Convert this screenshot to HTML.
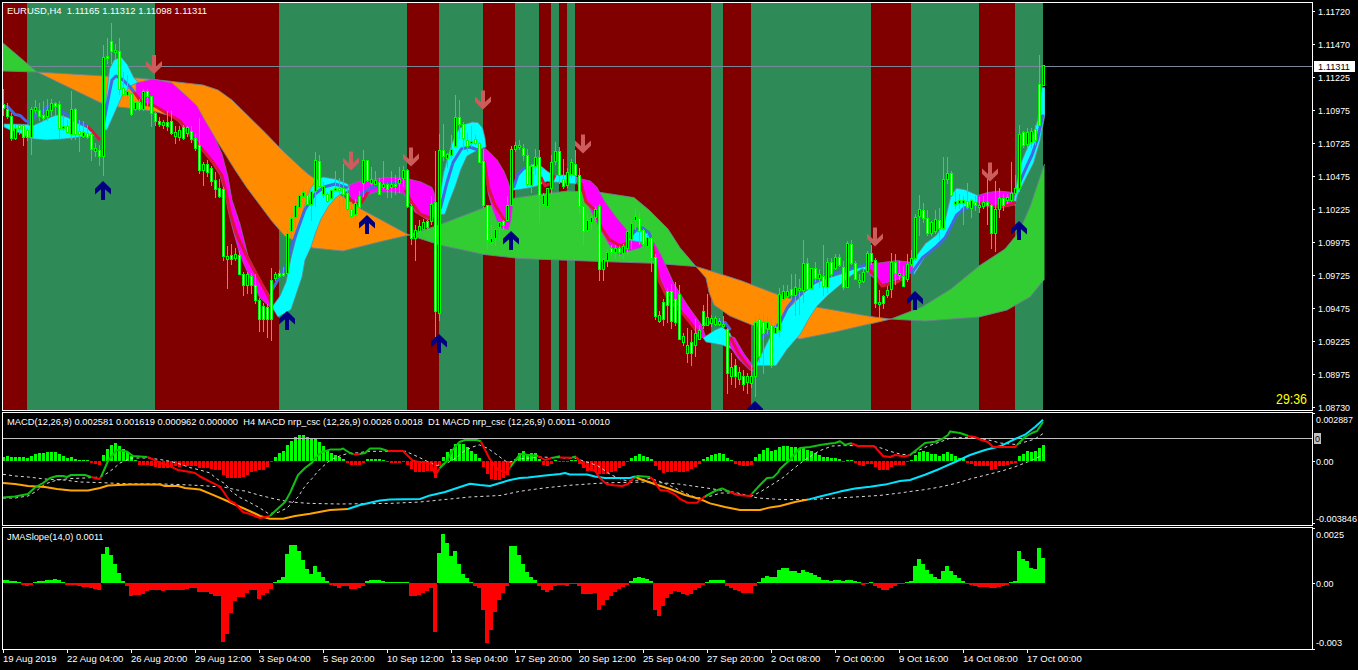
<!DOCTYPE html>
<html><head><meta charset="utf-8"><style>
html,body{margin:0;padding:0;background:#000;}
body{width:1358px;height:670px;overflow:hidden;}
svg{display:block;}
text{font-family:"Liberation Sans",sans-serif;font-size:9.8px;fill:#fff;}
</style></head><body>
<svg width="1358" height="670" viewBox="0 0 1358 670">
<rect width="1358" height="670" fill="#000"/>
<defs><clipPath id="mw"><rect x="3" y="3" width="1309" height="407"/></clipPath></defs>
<g clip-path="url(#mw)">
<g shape-rendering="crispEdges">
<rect x="3" y="3" width="24" height="407" fill="#800000"/>
<rect x="27" y="3" width="128" height="407" fill="#2E8B57"/>
<rect x="155" y="3" width="124" height="407" fill="#800000"/>
<rect x="279" y="3" width="128" height="407" fill="#2E8B57"/>
<rect x="407" y="3" width="32" height="407" fill="#800000"/>
<rect x="439" y="3" width="44" height="407" fill="#2E8B57"/>
<rect x="483" y="3" width="32" height="407" fill="#800000"/>
<rect x="515" y="3" width="24" height="407" fill="#2E8B57"/>
<rect x="539" y="3" width="12" height="407" fill="#800000"/>
<rect x="551" y="3" width="8" height="407" fill="#2E8B57"/>
<rect x="559" y="3" width="8" height="407" fill="#800000"/>
<rect x="567" y="3" width="8" height="407" fill="#2E8B57"/>
<rect x="575" y="3" width="136" height="407" fill="#800000"/>
<rect x="711" y="3" width="12" height="407" fill="#2E8B57"/>
<rect x="723" y="3" width="28" height="407" fill="#800000"/>
<rect x="751" y="3" width="120" height="407" fill="#2E8B57"/>
<rect x="871" y="3" width="40" height="407" fill="#800000"/>
<rect x="911" y="3" width="68" height="407" fill="#2E8B57"/>
<rect x="979" y="3" width="36" height="407" fill="#800000"/>
<rect x="1015" y="3" width="28" height="407" fill="#2E8B57"/>
</g>
<rect x="3" y="66" width="1309" height="1" fill="#778899" shape-rendering="crispEdges"/>
<polygon points="3,43 37,72 37,72 3,71.0" fill="#32CD32"/>
<polygon points="37,72 101,75.8 105,76 119,76.9 137,78 153,79.5 168,81 185,82.9 203,85 213.5,88.5 218,90 224,94.3 232,100 234.4,102.4 247,114.7 249,116.7 259.5,127.1 266,133.5 272,139.7 280,148 284.6,152.4 291,158.4 300,167 308,174 313,177.5 318,181 330,188 343,196.8 361,209 379,218.8 409,235 409,235 379,242 361,246.5 343,251 330,249.7 318,248.5 313,248 308,246 300,242.7 291,239 284.6,236 280,230.6 272,221.3 266,213.3 259.5,204.6 249,190.6 247,187.9 234.4,169 232,165.1 224,152.3 218,142.8 213.5,135.6 203,129.9 185,120 168,115.2 153,111 137,109.1 119,107 105,103.9 101,103 37,72.0" fill="#FF8C00"/>
<polygon points="409,235 439,225 440,224.6 484,207.8 486,207 515,198 520,197.3 543,194 568,191 587,191.9 601,192.5 634,197.6 649,210 654,215 668,229 680,247.7 696,266.5 696,266.5 680,265.3 668,264.4 654,263.3 649,263.1 634,262.6 601,261.5 587,261 568,260.3 543,259.4 520,258.5 515,257.9 486,254.7 484,254.5 440,245 439,244.7 409,235.0" fill="#32CD32"/>
<polygon points="696,266.5 706,269.5 709,270.4 711,271 714,272 730,277.1 742,281 752,284.8 776,293.9 779,295 800,301.8 816,307 835,310.3 874,317 890,319 890.8,319 890.8,319 890,319.2 874,323 835,332 816,335.8 800,339 779,332.9 776,332 752,325 742,320.9 730,316 714,305 711,297.2 709,292 706,278 696,266.5" fill="#FF8C00"/>
<polygon points="890.8,319 891,319 922,307 925,305.1 951,289 979,266 1005,249 1007,246.6 1019,232 1030,207 1044.5,164 1044.5,279 1030,297 1019,303.2 1007,310 1005,310.5 979,317 951,319.1 925,321 922,320.8 891,319.1 890.8,319.0" fill="#32CD32"/>
<polyline points="3,71 37,72 105,76 137,78 168,81 203,85 218,90 232,100 249,116.7 266,133.5 280,148 300,167 308,174 318,181 330,188 361,209 409,235 440,245 484,254.5 520,258.5 587,261 654,263.3 696,266.5 711,271 742,281 779,295 816,307 874,317 890,319 925,321 979,317 1007,310 1030,297 1044.5,279.0" fill="none" stroke="#6F8090" stroke-width="0.9"/>
<polyline points="3,43 37,72 101,103 119,107 153,111 185,120 213.5,135.6 224,152.3 234.4,169 247,187.9 259.5,204.6 272,221.3 284.6,236 291,239 313,248 343,251 379,242 409,235 439,225 486,207 515,198 543,194 568,191 601,192.5 634,197.6 649,210 668,229 680,247.7 696,266.5 706,278 709,292 714,305 730,316 752,325 776,332 800,339 835,332 874,323 891,319 922,307 951,289 979,266 1005,249 1019,232 1030,207 1044.5,164.0" fill="none" stroke="#6F8090" stroke-width="0.9"/>
<polygon points="4,124 11,124 28,124.5 31,126.5 42,121.5 52,116.5 57,115 63,116 68,117.5 73,121 80,124.6 88,128 95,134 95,136 86,136 73,138 63,139 46,140 31,138.6 20,133 10,130 4,127.0" fill="#00FFFF" stroke="#6F8090" stroke-width="0.7"/>
<polygon points="103,130 106,100 109.6,69 114,60 118.6,58 121,57 127.5,64.7 134,78 138.7,82.6 132,85 123,94 116,109.5 107,130.0" fill="#00FFFF" stroke="#6F8090" stroke-width="0.7"/>
<polygon points="136,83 153,79 172,83 186,95.5 197,106 205,120.6 213.6,135 222,154 228,177 232,200 240,224 248,256 262,283 270,296 273,310 270,307 260,298 250,278 240,255 233,230 228.7,213 224.5,192 220,175.3 212,162.8 201.5,150 191,137.7 178,121 168,114 155,106 142,104 136,95.0" fill="#FF00FF" stroke="#6F8090" stroke-width="0.7"/>
<polygon points="272,307 280,296 286,282 291,258 299,226 305,205 310,190 316,180 323,177 335,179 348,184 349.5,190 345,192 336.5,197 328.5,206 321,219 315.5,233 311,247 305,260 302,277 291,309.6 278,317.0" fill="#00FFFF" stroke="#6F8090" stroke-width="0.7"/>
<polygon points="349.5,184.8 360,181 385,177.6 403,177.6 421,182 432,187.4 434.6,194 436.4,215.5 428,220 415,212 408,200 403,193 390,192 375,192 367,195 360,201 353,201 349.5,195.0" fill="#FF00FF" stroke="#6F8090" stroke-width="0.7"/>
<polygon points="439,215 441,189 443.5,173 447,160 451,146 455,136 459,129 465.8,124 472.5,122 478,122.5 482.6,128 485,138 486,147 476,151 467,156 461,169 455,187 449.5,201 445,214.0" fill="#00FFFF" stroke="#6F8090" stroke-width="0.7"/>
<polygon points="483.7,147.6 489.3,152 497.1,159.9 503.8,171 508.3,182.2 511.5,194 512.5,207 511,220.3 508.3,230 501.6,228 497.1,221 492.6,209 488.2,193.4 486,175.5 483.7,157.6" fill="#FF00FF" stroke="#6F8090" stroke-width="0.7"/>
<polygon points="513,190 517.7,175 523,169 528,166.8 534.4,163.7 540.7,165.8 547,171 553,175 574,175 578,178 576,184 547,181.4 538.6,185.6 530,187.7 517.7,189.8" fill="#00FFFF" stroke="#6F8090" stroke-width="0.7"/>
<polygon points="576,177.7 590.4,181 596.7,187 605,201.8 615.5,216.4 626,229 630,235 638.5,241.5 642.7,245.6 640.6,247.7 626,252 619.7,255 611,247.7 601,231 590.4,210 582,191.3 578,185.0" fill="#FF00FF" stroke="#6F8090" stroke-width="0.7"/>
<polygon points="628,240 636,232 643,231 650,236 652,242 640,242.0" fill="#00FFFF" stroke="#6F8090" stroke-width="0.7"/>
<polygon points="650,238 652.6,246 658,273 666,291.8 682,310.6 693,326.8 698.3,337.5 706,337.5 701,324 687.5,305.3 674,283.8 660.6,254 655,244.0" fill="#FF00FF" stroke="#6F8090" stroke-width="0.7"/>
<polygon points="703,338 715,330 722,327 730,333 735,345 735,350 722,345 706,342.0" fill="#00FFFF" stroke="#6F8090" stroke-width="0.7"/>
<polygon points="729,336 734.6,337.5 744,353.7 752,364.4 753,371 749.4,369.8 738.6,359 727,342.0" fill="#FF00FF" stroke="#6F8090" stroke-width="0.7"/>
<polygon points="753,366 757.5,362 768.7,339.6 778,324.6 787.3,309.7 796.6,300.4 806,291 815.3,283.6 828.4,278 843.3,273.3 854.5,268.7 866,265.9 866,270 862,268.7 850.7,276 839.6,285.4 828.4,294.8 817.2,306 809.7,317.2 800.4,334 787.3,349 776,365.7 757.5,365.7" fill="#00FFFF" stroke="#6F8090" stroke-width="0.7"/>
<polygon points="866,264.5 882,262.6 897,260.6 913,262.6 913,272 897,280 882,284 870,275.0" fill="#FF00FF" stroke="#6F8090" stroke-width="0.7"/>
<polygon points="912,262 925.4,243.5 936.7,235 945,221 950.9,195.4 956.5,188.3 965,189.7 978,195.4 978,202.4 973.5,203.9 962,208 953.7,220.9 945,237.9 928,252 914,274.7" fill="#00FFFF" stroke="#6F8090" stroke-width="0.7"/>
<polygon points="977.8,195.4 987.7,192.5 999,191 1013,192.5 1016,202.4 1013,205.3 999,208 987.7,206.7 977.8,202.4" fill="#FF00FF" stroke="#6F8090" stroke-width="0.7"/>
<polygon points="1014,200 1016,187 1020,165.6 1025.5,152 1032,138.7 1037.6,120 1041.7,87.6 1045,87.6 1045,114.5 1040,141 1033.6,163 1027,176 1017.5,195 1015,206.0" fill="#00FFFF" stroke="#6F8090" stroke-width="0.7"/>
<polyline points="3,105.7 8,107 15,114.6 20,115.4 26,121 31,122 36,115 42,112 47,107 52,104.4 57,107 63,112 68,115 73,118 80,122.6 87,126.0" fill="none" stroke="#4169E1" stroke-width="3" stroke-linejoin="round"/>
<polyline points="87,126 92,131 100,140.0" fill="none" stroke="#DC143C" stroke-width="3" stroke-linejoin="round"/>
<polyline points="102,132 107,105 112,80 116,76 123,80 130,87 134,92.0" fill="none" stroke="#4169E1" stroke-width="3" stroke-linejoin="round"/>
<polyline points="134,92 142.5,104 155,106 168,114 180,121 192.5,137.7 203,150 213.5,162.8 221.8,175.3 226,192 230.2,213 236.5,234 248,259 267,293.5 272,305.0" fill="none" stroke="#DC143C" stroke-width="3" stroke-linejoin="round"/>
<polyline points="272,290 286,266 294,240 304.7,210 315,194 324,187 335,184 348,188.0" fill="none" stroke="#4169E1" stroke-width="3" stroke-linejoin="round"/>
<polyline points="360,195 370,188 385,184 400,183.0" fill="none" stroke="#4169E1" stroke-width="3" stroke-linejoin="round"/>
<polyline points="349,198 356,204 362,202 368,192.0" fill="none" stroke="#DC143C" stroke-width="3" stroke-linejoin="round"/>
<polyline points="405,190 412,203 420,214 430,218.0" fill="none" stroke="#DC143C" stroke-width="3" stroke-linejoin="round"/>
<polyline points="440.4,208.6 446.7,183.5 453,162.6 461.3,149 469.7,147 478,150.0" fill="none" stroke="#4169E1" stroke-width="3" stroke-linejoin="round"/>
<polyline points="484.3,160.5 488.5,187.7 494.7,204.4 501,214.8 505,221.0" fill="none" stroke="#DC143C" stroke-width="3" stroke-linejoin="round"/>
<polyline points="513.5,187.7 517.7,175 523,169 528,166.8" fill="none" stroke="#4169E1" stroke-width="3" stroke-linejoin="round"/>
<polyline points="540.7,177 545,185.6 551,183.5 555,175.0" fill="none" stroke="#DC143C" stroke-width="3" stroke-linejoin="round"/>
<polyline points="581,183 586,201.8 594.6,210 601,226.8 609,239.4 619.7,245.6 626,243.5" fill="none" stroke="#DC143C" stroke-width="3" stroke-linejoin="round"/>
<polyline points="630,237 636.4,229 642.7,228 649,233 651,238.3" fill="none" stroke="#4169E1" stroke-width="3" stroke-linejoin="round"/>
<polyline points="652.6,246 659.3,281 668.7,300 684.8,316 695.6,329.5 701,334.8" fill="none" stroke="#DC143C" stroke-width="3" stroke-linejoin="round"/>
<polyline points="703.7,325 714.4,321 725,322.4 730.5,330.0" fill="none" stroke="#4169E1" stroke-width="3" stroke-linejoin="round"/>
<polyline points="730.5,337.5 738.6,353.7 746.7,364.4 752,369.8" fill="none" stroke="#DC143C" stroke-width="3" stroke-linejoin="round"/>
<polyline points="753.7,358 761,338 768.7,333 779.9,323 787.3,307.8 794.8,298.5 804,290 815.3,281 828.4,275.5 843,271 855,267.5 866,265.0" fill="none" stroke="#4169E1" stroke-width="3" stroke-linejoin="round"/>
<polyline points="870,270 882,286 897,282 910,275.0" fill="none" stroke="#DC143C" stroke-width="3" stroke-linejoin="round"/>
<polyline points="911,274 922.5,257.7 936.7,246.4 945,237.9 950.9,226.5 956.5,215.2 965,208 976.4,206.0" fill="none" stroke="#4169E1" stroke-width="3" stroke-linejoin="round"/>
<polyline points="979,202.4 993.4,206.5 1007.5,205.3 1016,202.4" fill="none" stroke="#DC143C" stroke-width="3" stroke-linejoin="round"/>
<polyline points="1019,184 1027,165.6 1032,155 1037.6,138.7 1043,114.5" fill="none" stroke="#4169E1" stroke-width="3" stroke-linejoin="round"/>
<g shape-rendering="crispEdges">
<rect x="3" y="89" width="1" height="27" fill="#00FF00"/>
<rect x="2" y="104" width="3" height="5" fill="#00FF00"/>
<rect x="3" y="105" width="1" height="3" fill="#FFFFFF"/>
<rect x="7" y="103" width="1" height="16" fill="#00FF00"/>
<rect x="6" y="109" width="3" height="8" fill="#00FF00"/>
<rect x="7" y="110" width="1" height="6" fill="#FFFFFF"/>
<rect x="11" y="113" width="1" height="28" fill="#00FF00"/>
<rect x="10" y="116" width="3" height="23" fill="#00FF00"/>
<rect x="11" y="117" width="1" height="21" fill="#FFFFFF"/>
<rect x="15" y="124" width="1" height="16" fill="#00FF00"/>
<rect x="14" y="128" width="3" height="11" fill="#00FF00"/>
<rect x="15" y="129" width="1" height="9" fill="#000000"/>
<rect x="19" y="124" width="1" height="11" fill="#00FF00"/>
<rect x="18" y="125" width="3" height="4" fill="#00FF00"/>
<rect x="19" y="126" width="1" height="2" fill="#FFFFFF"/>
<rect x="23" y="124" width="1" height="22" fill="#00FF00"/>
<rect x="22" y="125" width="3" height="13" fill="#00FF00"/>
<rect x="23" y="126" width="1" height="11" fill="#FFFFFF"/>
<rect x="27" y="128" width="1" height="13" fill="#00FF00"/>
<rect x="26" y="130" width="3" height="8" fill="#00FF00"/>
<rect x="27" y="131" width="1" height="6" fill="#FFFFFF"/>
<rect x="31" y="107" width="1" height="48" fill="#00FF00"/>
<rect x="30" y="109" width="3" height="29" fill="#00FF00"/>
<rect x="31" y="110" width="1" height="27" fill="#000000"/>
<rect x="35" y="100" width="1" height="14" fill="#00FF00"/>
<rect x="34" y="107" width="3" height="4" fill="#00FF00"/>
<rect x="35" y="108" width="1" height="2" fill="#000000"/>
<rect x="39" y="103" width="1" height="18" fill="#00FF00"/>
<rect x="38" y="110" width="3" height="7" fill="#00FF00"/>
<rect x="39" y="111" width="1" height="5" fill="#FFFFFF"/>
<rect x="43" y="101" width="1" height="20" fill="#00FF00"/>
<rect x="42" y="115" width="3" height="4" fill="#00FF00"/>
<rect x="43" y="116" width="1" height="2" fill="#FFFFFF"/>
<rect x="47" y="99" width="1" height="22" fill="#00FF00"/>
<rect x="46" y="110" width="3" height="7" fill="#00FF00"/>
<rect x="47" y="111" width="1" height="5" fill="#000000"/>
<rect x="51" y="99" width="1" height="17" fill="#00FF00"/>
<rect x="50" y="103" width="3" height="8" fill="#00FF00"/>
<rect x="51" y="104" width="1" height="6" fill="#000000"/>
<rect x="55" y="102" width="1" height="14" fill="#00FF00"/>
<rect x="54" y="103" width="3" height="4" fill="#00FF00"/>
<rect x="55" y="104" width="1" height="2" fill="#FFFFFF"/>
<rect x="59" y="101" width="1" height="37" fill="#00FF00"/>
<rect x="58" y="104" width="3" height="25" fill="#00FF00"/>
<rect x="59" y="105" width="1" height="23" fill="#FFFFFF"/>
<rect x="63" y="115" width="1" height="16" fill="#00FF00"/>
<rect x="62" y="126" width="3" height="3" fill="#00FF00"/>
<rect x="63" y="127" width="1" height="1" fill="#000000"/>
<rect x="67" y="120" width="1" height="13" fill="#00FF00"/>
<rect x="66" y="126" width="3" height="7" fill="#00FF00"/>
<rect x="67" y="127" width="1" height="5" fill="#FFFFFF"/>
<rect x="71" y="91" width="1" height="49" fill="#00FF00"/>
<rect x="70" y="109" width="3" height="26" fill="#00FF00"/>
<rect x="71" y="110" width="1" height="24" fill="#000000"/>
<rect x="75" y="108" width="1" height="32" fill="#00FF00"/>
<rect x="74" y="109" width="3" height="26" fill="#00FF00"/>
<rect x="75" y="110" width="1" height="24" fill="#FFFFFF"/>
<rect x="79" y="120" width="1" height="32" fill="#00FF00"/>
<rect x="78" y="131" width="3" height="4" fill="#00FF00"/>
<rect x="79" y="132" width="1" height="2" fill="#FFFFFF"/>
<rect x="83" y="121" width="1" height="17" fill="#00FF00"/>
<rect x="82" y="132" width="3" height="5" fill="#00FF00"/>
<rect x="83" y="133" width="1" height="3" fill="#000000"/>
<rect x="87" y="125" width="1" height="14" fill="#00FF00"/>
<rect x="86" y="133" width="3" height="5" fill="#00FF00"/>
<rect x="87" y="134" width="1" height="3" fill="#FFFFFF"/>
<rect x="91" y="132" width="1" height="29" fill="#00FF00"/>
<rect x="90" y="134" width="3" height="16" fill="#00FF00"/>
<rect x="91" y="135" width="1" height="14" fill="#FFFFFF"/>
<rect x="95" y="143" width="1" height="14" fill="#00FF00"/>
<rect x="94" y="148" width="3" height="4" fill="#00FF00"/>
<rect x="95" y="149" width="1" height="2" fill="#000000"/>
<rect x="99" y="145" width="1" height="21" fill="#00FF00"/>
<rect x="98" y="150" width="3" height="7" fill="#00FF00"/>
<rect x="99" y="151" width="1" height="5" fill="#FFFFFF"/>
<rect x="103" y="45" width="1" height="131" fill="#00FF00"/>
<rect x="102" y="57" width="3" height="100" fill="#00FF00"/>
<rect x="103" y="58" width="1" height="98" fill="#000000"/>
<rect x="107" y="38" width="1" height="26" fill="#00FF00"/>
<rect x="106" y="56" width="3" height="3" fill="#00FF00"/>
<rect x="107" y="57" width="1" height="1" fill="#FFFFFF"/>
<rect x="111" y="23" width="1" height="41" fill="#00FF00"/>
<rect x="110" y="41" width="3" height="11" fill="#00FF00"/>
<rect x="111" y="42" width="1" height="9" fill="#FFFFFF"/>
<rect x="115" y="44" width="1" height="16" fill="#00FF00"/>
<rect x="114" y="50" width="3" height="3" fill="#00FF00"/>
<rect x="115" y="51" width="1" height="1" fill="#000000"/>
<rect x="119" y="38" width="1" height="57" fill="#00FF00"/>
<rect x="118" y="51" width="3" height="39" fill="#00FF00"/>
<rect x="119" y="52" width="1" height="37" fill="#FFFFFF"/>
<rect x="123" y="72" width="1" height="28" fill="#00FF00"/>
<rect x="122" y="88" width="3" height="7" fill="#00FF00"/>
<rect x="123" y="89" width="1" height="5" fill="#FFFFFF"/>
<rect x="127" y="75" width="1" height="23" fill="#00FF00"/>
<rect x="126" y="91" width="3" height="5" fill="#00FF00"/>
<rect x="127" y="92" width="1" height="3" fill="#000000"/>
<rect x="131" y="93" width="1" height="23" fill="#00FF00"/>
<rect x="130" y="94" width="3" height="21" fill="#00FF00"/>
<rect x="131" y="95" width="1" height="19" fill="#FFFFFF"/>
<rect x="135" y="100" width="1" height="11" fill="#00FF00"/>
<rect x="134" y="102" width="3" height="8" fill="#00FF00"/>
<rect x="135" y="103" width="1" height="6" fill="#000000"/>
<rect x="139" y="99" width="1" height="12" fill="#00FF00"/>
<rect x="138" y="102" width="3" height="8" fill="#00FF00"/>
<rect x="139" y="103" width="1" height="6" fill="#FFFFFF"/>
<rect x="143" y="89" width="1" height="22" fill="#00FF00"/>
<rect x="142" y="91" width="3" height="19" fill="#00FF00"/>
<rect x="143" y="92" width="1" height="17" fill="#000000"/>
<rect x="147" y="89" width="1" height="18" fill="#00FF00"/>
<rect x="146" y="91" width="3" height="6" fill="#00FF00"/>
<rect x="147" y="92" width="1" height="4" fill="#FFFFFF"/>
<rect x="151" y="96" width="1" height="31" fill="#00FF00"/>
<rect x="150" y="96" width="3" height="18" fill="#00FF00"/>
<rect x="151" y="97" width="1" height="16" fill="#FFFFFF"/>
<rect x="155" y="112" width="1" height="14" fill="#00FF00"/>
<rect x="154" y="113" width="3" height="9" fill="#00FF00"/>
<rect x="155" y="114" width="1" height="7" fill="#FFFFFF"/>
<rect x="159" y="117" width="1" height="10" fill="#00FF00"/>
<rect x="158" y="121" width="3" height="4" fill="#00FF00"/>
<rect x="159" y="122" width="1" height="2" fill="#FFFFFF"/>
<rect x="163" y="120" width="1" height="9" fill="#00FF00"/>
<rect x="162" y="122" width="3" height="4" fill="#00FF00"/>
<rect x="163" y="123" width="1" height="2" fill="#000000"/>
<rect x="167" y="111" width="1" height="20" fill="#00FF00"/>
<rect x="166" y="122" width="3" height="5" fill="#00FF00"/>
<rect x="167" y="123" width="1" height="3" fill="#FFFFFF"/>
<rect x="171" y="111" width="1" height="24" fill="#00FF00"/>
<rect x="170" y="121" width="3" height="13" fill="#00FF00"/>
<rect x="171" y="122" width="1" height="11" fill="#FFFFFF"/>
<rect x="175" y="126" width="1" height="18" fill="#00FF00"/>
<rect x="174" y="132" width="3" height="5" fill="#00FF00"/>
<rect x="175" y="133" width="1" height="3" fill="#000000"/>
<rect x="179" y="126" width="1" height="15" fill="#00FF00"/>
<rect x="178" y="130" width="3" height="8" fill="#00FF00"/>
<rect x="179" y="131" width="1" height="6" fill="#000000"/>
<rect x="183" y="125" width="1" height="15" fill="#00FF00"/>
<rect x="182" y="127" width="3" height="12" fill="#00FF00"/>
<rect x="183" y="128" width="1" height="10" fill="#FFFFFF"/>
<rect x="187" y="126" width="1" height="11" fill="#00FF00"/>
<rect x="186" y="127" width="3" height="7" fill="#00FF00"/>
<rect x="187" y="128" width="1" height="5" fill="#000000"/>
<rect x="191" y="126" width="1" height="17" fill="#00FF00"/>
<rect x="190" y="131" width="3" height="9" fill="#00FF00"/>
<rect x="191" y="132" width="1" height="7" fill="#FFFFFF"/>
<rect x="195" y="134" width="1" height="17" fill="#00FF00"/>
<rect x="194" y="138" width="3" height="11" fill="#00FF00"/>
<rect x="195" y="139" width="1" height="9" fill="#FFFFFF"/>
<rect x="199" y="118" width="1" height="56" fill="#00FF00"/>
<rect x="198" y="145" width="3" height="26" fill="#00FF00"/>
<rect x="199" y="146" width="1" height="24" fill="#FFFFFF"/>
<rect x="203" y="162" width="1" height="24" fill="#00FF00"/>
<rect x="202" y="164" width="3" height="7" fill="#00FF00"/>
<rect x="203" y="165" width="1" height="5" fill="#000000"/>
<rect x="207" y="160" width="1" height="17" fill="#00FF00"/>
<rect x="206" y="164" width="3" height="9" fill="#00FF00"/>
<rect x="207" y="165" width="1" height="7" fill="#FFFFFF"/>
<rect x="211" y="166" width="1" height="20" fill="#00FF00"/>
<rect x="210" y="168" width="3" height="14" fill="#00FF00"/>
<rect x="211" y="169" width="1" height="12" fill="#FFFFFF"/>
<rect x="215" y="172" width="1" height="26" fill="#00FF00"/>
<rect x="214" y="180" width="3" height="10" fill="#00FF00"/>
<rect x="215" y="181" width="1" height="8" fill="#FFFFFF"/>
<rect x="219" y="179" width="1" height="19" fill="#00FF00"/>
<rect x="218" y="188" width="3" height="9" fill="#00FF00"/>
<rect x="219" y="189" width="1" height="7" fill="#FFFFFF"/>
<rect x="223" y="187" width="1" height="74" fill="#00FF00"/>
<rect x="222" y="189" width="3" height="68" fill="#00FF00"/>
<rect x="223" y="190" width="1" height="66" fill="#FFFFFF"/>
<rect x="227" y="246" width="1" height="43" fill="#00FF00"/>
<rect x="226" y="256" width="3" height="4" fill="#00FF00"/>
<rect x="227" y="257" width="1" height="2" fill="#000000"/>
<rect x="231" y="244" width="1" height="21" fill="#00FF00"/>
<rect x="230" y="255" width="3" height="5" fill="#00FF00"/>
<rect x="231" y="256" width="1" height="3" fill="#FFFFFF"/>
<rect x="235" y="248" width="1" height="13" fill="#00FF00"/>
<rect x="234" y="254" width="3" height="5" fill="#00FF00"/>
<rect x="235" y="255" width="1" height="3" fill="#000000"/>
<rect x="239" y="251" width="1" height="24" fill="#00FF00"/>
<rect x="238" y="255" width="3" height="20" fill="#00FF00"/>
<rect x="239" y="256" width="1" height="18" fill="#FFFFFF"/>
<rect x="243" y="272" width="1" height="24" fill="#00FF00"/>
<rect x="242" y="274" width="3" height="12" fill="#00FF00"/>
<rect x="243" y="275" width="1" height="10" fill="#FFFFFF"/>
<rect x="247" y="272" width="1" height="22" fill="#00FF00"/>
<rect x="246" y="274" width="3" height="12" fill="#00FF00"/>
<rect x="247" y="275" width="1" height="10" fill="#000000"/>
<rect x="251" y="273" width="1" height="21" fill="#00FF00"/>
<rect x="250" y="276" width="3" height="10" fill="#00FF00"/>
<rect x="251" y="277" width="1" height="8" fill="#FFFFFF"/>
<rect x="255" y="274" width="1" height="30" fill="#00FF00"/>
<rect x="254" y="285" width="3" height="16" fill="#00FF00"/>
<rect x="255" y="286" width="1" height="14" fill="#FFFFFF"/>
<rect x="259" y="298" width="1" height="34" fill="#00FF00"/>
<rect x="258" y="300" width="3" height="20" fill="#00FF00"/>
<rect x="259" y="301" width="1" height="18" fill="#FFFFFF"/>
<rect x="263" y="303" width="1" height="29" fill="#00FF00"/>
<rect x="262" y="306" width="3" height="14" fill="#00FF00"/>
<rect x="263" y="307" width="1" height="12" fill="#FFFFFF"/>
<rect x="267" y="304" width="1" height="34" fill="#00FF00"/>
<rect x="266" y="307" width="3" height="13" fill="#00FF00"/>
<rect x="267" y="308" width="1" height="11" fill="#FFFFFF"/>
<rect x="271" y="268" width="1" height="73" fill="#00FF00"/>
<rect x="270" y="280" width="3" height="40" fill="#00FF00"/>
<rect x="271" y="281" width="1" height="38" fill="#FFFFFF"/>
<rect x="275" y="272" width="1" height="9" fill="#00FF00"/>
<rect x="274" y="274" width="3" height="5" fill="#00FF00"/>
<rect x="275" y="275" width="1" height="3" fill="#000000"/>
<rect x="279" y="270" width="1" height="8" fill="#00FF00"/>
<rect x="278" y="273" width="3" height="4" fill="#00FF00"/>
<rect x="279" y="274" width="1" height="2" fill="#FFFFFF"/>
<rect x="283" y="267" width="1" height="10" fill="#00FF00"/>
<rect x="282" y="273" width="3" height="3" fill="#00FF00"/>
<rect x="283" y="274" width="1" height="1" fill="#FFFFFF"/>
<rect x="287" y="230" width="1" height="45" fill="#00FF00"/>
<rect x="286" y="233" width="3" height="41" fill="#00FF00"/>
<rect x="287" y="234" width="1" height="39" fill="#000000"/>
<rect x="291" y="214" width="1" height="25" fill="#00FF00"/>
<rect x="290" y="218" width="3" height="14" fill="#00FF00"/>
<rect x="291" y="219" width="1" height="12" fill="#000000"/>
<rect x="295" y="201" width="1" height="27" fill="#00FF00"/>
<rect x="294" y="205" width="3" height="13" fill="#00FF00"/>
<rect x="295" y="206" width="1" height="11" fill="#000000"/>
<rect x="299" y="194" width="1" height="16" fill="#00FF00"/>
<rect x="298" y="195" width="3" height="13" fill="#00FF00"/>
<rect x="299" y="196" width="1" height="11" fill="#000000"/>
<rect x="303" y="188" width="1" height="14" fill="#00FF00"/>
<rect x="302" y="192" width="3" height="5" fill="#00FF00"/>
<rect x="303" y="193" width="1" height="3" fill="#000000"/>
<rect x="307" y="190" width="1" height="15" fill="#00FF00"/>
<rect x="306" y="195" width="3" height="10" fill="#00FF00"/>
<rect x="307" y="196" width="1" height="8" fill="#FFFFFF"/>
<rect x="311" y="190" width="1" height="31" fill="#00FF00"/>
<rect x="310" y="191" width="3" height="14" fill="#00FF00"/>
<rect x="311" y="192" width="1" height="12" fill="#000000"/>
<rect x="315" y="152" width="1" height="55" fill="#00FF00"/>
<rect x="314" y="160" width="3" height="32" fill="#00FF00"/>
<rect x="315" y="161" width="1" height="30" fill="#000000"/>
<rect x="319" y="155" width="1" height="32" fill="#00FF00"/>
<rect x="318" y="161" width="3" height="26" fill="#00FF00"/>
<rect x="319" y="162" width="1" height="24" fill="#FFFFFF"/>
<rect x="323" y="182" width="1" height="16" fill="#00FF00"/>
<rect x="322" y="186" width="3" height="9" fill="#00FF00"/>
<rect x="323" y="187" width="1" height="7" fill="#000000"/>
<rect x="327" y="192" width="1" height="11" fill="#00FF00"/>
<rect x="326" y="194" width="3" height="8" fill="#00FF00"/>
<rect x="327" y="195" width="1" height="6" fill="#FFFFFF"/>
<rect x="331" y="190" width="1" height="9" fill="#00FF00"/>
<rect x="330" y="190" width="3" height="9" fill="#00FF00"/>
<rect x="331" y="191" width="1" height="7" fill="#000000"/>
<rect x="335" y="171" width="1" height="20" fill="#00FF00"/>
<rect x="334" y="188" width="3" height="3" fill="#00FF00"/>
<rect x="335" y="189" width="1" height="1" fill="#000000"/>
<rect x="339" y="178" width="1" height="35" fill="#00FF00"/>
<rect x="338" y="188" width="3" height="3" fill="#00FF00"/>
<rect x="339" y="189" width="1" height="1" fill="#FFFFFF"/>
<rect x="343" y="164" width="1" height="41" fill="#00FF00"/>
<rect x="342" y="188" width="3" height="7" fill="#00FF00"/>
<rect x="343" y="189" width="1" height="5" fill="#FFFFFF"/>
<rect x="347" y="188" width="1" height="24" fill="#00FF00"/>
<rect x="346" y="193" width="3" height="17" fill="#00FF00"/>
<rect x="347" y="194" width="1" height="15" fill="#FFFFFF"/>
<rect x="351" y="202" width="1" height="15" fill="#00FF00"/>
<rect x="350" y="209" width="3" height="8" fill="#00FF00"/>
<rect x="351" y="210" width="1" height="6" fill="#FFFFFF"/>
<rect x="355" y="199" width="1" height="21" fill="#00FF00"/>
<rect x="354" y="203" width="3" height="12" fill="#00FF00"/>
<rect x="355" y="204" width="1" height="10" fill="#000000"/>
<rect x="359" y="191" width="1" height="21" fill="#00FF00"/>
<rect x="358" y="196" width="3" height="12" fill="#00FF00"/>
<rect x="359" y="197" width="1" height="10" fill="#FFFFFF"/>
<rect x="363" y="150" width="1" height="47" fill="#00FF00"/>
<rect x="362" y="160" width="3" height="24" fill="#00FF00"/>
<rect x="363" y="161" width="1" height="22" fill="#000000"/>
<rect x="367" y="160" width="1" height="22" fill="#00FF00"/>
<rect x="366" y="160" width="3" height="21" fill="#00FF00"/>
<rect x="367" y="161" width="1" height="19" fill="#FFFFFF"/>
<rect x="371" y="167" width="1" height="18" fill="#00FF00"/>
<rect x="370" y="179" width="3" height="5" fill="#00FF00"/>
<rect x="371" y="180" width="1" height="3" fill="#000000"/>
<rect x="375" y="171" width="1" height="14" fill="#00FF00"/>
<rect x="374" y="180" width="3" height="5" fill="#00FF00"/>
<rect x="375" y="181" width="1" height="3" fill="#000000"/>
<rect x="379" y="178" width="1" height="17" fill="#00FF00"/>
<rect x="378" y="182" width="3" height="13" fill="#00FF00"/>
<rect x="379" y="183" width="1" height="11" fill="#FFFFFF"/>
<rect x="383" y="161" width="1" height="29" fill="#00FF00"/>
<rect x="382" y="184" width="3" height="4" fill="#00FF00"/>
<rect x="383" y="185" width="1" height="2" fill="#000000"/>
<rect x="387" y="183" width="1" height="15" fill="#00FF00"/>
<rect x="386" y="184" width="3" height="6" fill="#00FF00"/>
<rect x="387" y="185" width="1" height="4" fill="#FFFFFF"/>
<rect x="391" y="171" width="1" height="27" fill="#00FF00"/>
<rect x="390" y="184" width="3" height="4" fill="#00FF00"/>
<rect x="391" y="185" width="1" height="2" fill="#000000"/>
<rect x="395" y="175" width="1" height="20" fill="#00FF00"/>
<rect x="394" y="184" width="3" height="3" fill="#00FF00"/>
<rect x="395" y="185" width="1" height="1" fill="#FFFFFF"/>
<rect x="399" y="167" width="1" height="26" fill="#00FF00"/>
<rect x="398" y="179" width="3" height="5" fill="#00FF00"/>
<rect x="399" y="180" width="1" height="3" fill="#000000"/>
<rect x="403" y="166" width="1" height="21" fill="#00FF00"/>
<rect x="402" y="170" width="3" height="9" fill="#00FF00"/>
<rect x="403" y="171" width="1" height="7" fill="#000000"/>
<rect x="407" y="169" width="1" height="39" fill="#00FF00"/>
<rect x="406" y="170" width="3" height="37" fill="#00FF00"/>
<rect x="407" y="171" width="1" height="35" fill="#FFFFFF"/>
<rect x="411" y="204" width="1" height="41" fill="#00FF00"/>
<rect x="410" y="206" width="3" height="33" fill="#00FF00"/>
<rect x="411" y="207" width="1" height="31" fill="#FFFFFF"/>
<rect x="415" y="225" width="1" height="36" fill="#00FF00"/>
<rect x="414" y="230" width="3" height="9" fill="#00FF00"/>
<rect x="415" y="231" width="1" height="7" fill="#000000"/>
<rect x="419" y="220" width="1" height="13" fill="#00FF00"/>
<rect x="418" y="226" width="3" height="6" fill="#00FF00"/>
<rect x="419" y="227" width="1" height="4" fill="#000000"/>
<rect x="423" y="219" width="1" height="11" fill="#00FF00"/>
<rect x="422" y="222" width="3" height="8" fill="#00FF00"/>
<rect x="423" y="223" width="1" height="6" fill="#000000"/>
<rect x="427" y="220" width="1" height="10" fill="#00FF00"/>
<rect x="426" y="221" width="3" height="7" fill="#00FF00"/>
<rect x="427" y="222" width="1" height="5" fill="#FFFFFF"/>
<rect x="431" y="196" width="1" height="29" fill="#00FF00"/>
<rect x="430" y="204" width="3" height="18" fill="#00FF00"/>
<rect x="431" y="205" width="1" height="16" fill="#000000"/>
<rect x="435" y="151" width="1" height="186" fill="#00FF00"/>
<rect x="434" y="202" width="3" height="110" fill="#00FF00"/>
<rect x="435" y="203" width="1" height="108" fill="#FFFFFF"/>
<rect x="439" y="134" width="1" height="187" fill="#00FF00"/>
<rect x="438" y="150" width="3" height="164" fill="#00FF00"/>
<rect x="439" y="151" width="1" height="162" fill="#000000"/>
<rect x="443" y="124" width="1" height="37" fill="#00FF00"/>
<rect x="442" y="150" width="3" height="7" fill="#00FF00"/>
<rect x="443" y="151" width="1" height="5" fill="#FFFFFF"/>
<rect x="447" y="153" width="1" height="15" fill="#00FF00"/>
<rect x="446" y="154" width="3" height="5" fill="#00FF00"/>
<rect x="447" y="155" width="1" height="3" fill="#000000"/>
<rect x="451" y="135" width="1" height="24" fill="#00FF00"/>
<rect x="450" y="149" width="3" height="7" fill="#00FF00"/>
<rect x="451" y="150" width="1" height="5" fill="#000000"/>
<rect x="455" y="95" width="1" height="52" fill="#00FF00"/>
<rect x="454" y="117" width="3" height="30" fill="#00FF00"/>
<rect x="455" y="118" width="1" height="28" fill="#000000"/>
<rect x="459" y="100" width="1" height="39" fill="#00FF00"/>
<rect x="458" y="117" width="3" height="8" fill="#00FF00"/>
<rect x="459" y="118" width="1" height="6" fill="#FFFFFF"/>
<rect x="463" y="122" width="1" height="28" fill="#00FF00"/>
<rect x="462" y="124" width="3" height="15" fill="#00FF00"/>
<rect x="463" y="125" width="1" height="13" fill="#FFFFFF"/>
<rect x="467" y="133" width="1" height="19" fill="#00FF00"/>
<rect x="466" y="140" width="3" height="7" fill="#00FF00"/>
<rect x="467" y="141" width="1" height="5" fill="#FFFFFF"/>
<rect x="471" y="126" width="1" height="21" fill="#00FF00"/>
<rect x="470" y="141" width="3" height="3" fill="#00FF00"/>
<rect x="471" y="142" width="1" height="1" fill="#000000"/>
<rect x="475" y="135" width="1" height="10" fill="#00FF00"/>
<rect x="474" y="139" width="3" height="5" fill="#00FF00"/>
<rect x="475" y="140" width="1" height="3" fill="#FFFFFF"/>
<rect x="479" y="142" width="1" height="21" fill="#00FF00"/>
<rect x="478" y="143" width="3" height="20" fill="#00FF00"/>
<rect x="479" y="144" width="1" height="18" fill="#FFFFFF"/>
<rect x="483" y="149" width="1" height="59" fill="#00FF00"/>
<rect x="482" y="161" width="3" height="45" fill="#00FF00"/>
<rect x="483" y="162" width="1" height="43" fill="#FFFFFF"/>
<rect x="487" y="205" width="1" height="44" fill="#00FF00"/>
<rect x="486" y="205" width="3" height="36" fill="#00FF00"/>
<rect x="487" y="206" width="1" height="34" fill="#FFFFFF"/>
<rect x="491" y="225" width="1" height="21" fill="#00FF00"/>
<rect x="490" y="238" width="3" height="5" fill="#00FF00"/>
<rect x="491" y="239" width="1" height="3" fill="#000000"/>
<rect x="495" y="229" width="1" height="17" fill="#00FF00"/>
<rect x="494" y="229" width="3" height="10" fill="#00FF00"/>
<rect x="495" y="230" width="1" height="8" fill="#000000"/>
<rect x="499" y="222" width="1" height="19" fill="#00FF00"/>
<rect x="498" y="222" width="3" height="6" fill="#00FF00"/>
<rect x="499" y="223" width="1" height="4" fill="#000000"/>
<rect x="503" y="220" width="1" height="10" fill="#00FF00"/>
<rect x="502" y="221" width="3" height="5" fill="#00FF00"/>
<rect x="503" y="222" width="1" height="3" fill="#FFFFFF"/>
<rect x="507" y="196" width="1" height="25" fill="#00FF00"/>
<rect x="506" y="205" width="3" height="16" fill="#00FF00"/>
<rect x="507" y="206" width="1" height="14" fill="#000000"/>
<rect x="511" y="146" width="1" height="60" fill="#00FF00"/>
<rect x="510" y="149" width="3" height="57" fill="#00FF00"/>
<rect x="511" y="150" width="1" height="55" fill="#000000"/>
<rect x="515" y="142" width="1" height="10" fill="#00FF00"/>
<rect x="514" y="145" width="3" height="5" fill="#00FF00"/>
<rect x="515" y="146" width="1" height="3" fill="#000000"/>
<rect x="519" y="140" width="1" height="10" fill="#00FF00"/>
<rect x="518" y="145" width="3" height="3" fill="#00FF00"/>
<rect x="519" y="146" width="1" height="1" fill="#000000"/>
<rect x="523" y="144" width="1" height="17" fill="#00FF00"/>
<rect x="522" y="148" width="3" height="8" fill="#00FF00"/>
<rect x="523" y="149" width="1" height="6" fill="#FFFFFF"/>
<rect x="527" y="149" width="1" height="38" fill="#00FF00"/>
<rect x="526" y="155" width="3" height="30" fill="#00FF00"/>
<rect x="527" y="156" width="1" height="28" fill="#FFFFFF"/>
<rect x="531" y="164" width="1" height="29" fill="#00FF00"/>
<rect x="530" y="166" width="3" height="20" fill="#00FF00"/>
<rect x="531" y="167" width="1" height="18" fill="#000000"/>
<rect x="535" y="149" width="1" height="26" fill="#00FF00"/>
<rect x="534" y="157" width="3" height="10" fill="#00FF00"/>
<rect x="535" y="158" width="1" height="8" fill="#000000"/>
<rect x="539" y="150" width="1" height="73" fill="#00FF00"/>
<rect x="538" y="157" width="3" height="39" fill="#00FF00"/>
<rect x="539" y="158" width="1" height="37" fill="#FFFFFF"/>
<rect x="543" y="193" width="1" height="14" fill="#00FF00"/>
<rect x="542" y="195" width="3" height="10" fill="#00FF00"/>
<rect x="543" y="196" width="1" height="8" fill="#000000"/>
<rect x="547" y="188" width="1" height="19" fill="#00FF00"/>
<rect x="546" y="188" width="3" height="19" fill="#00FF00"/>
<rect x="547" y="189" width="1" height="17" fill="#000000"/>
<rect x="551" y="155" width="1" height="39" fill="#00FF00"/>
<rect x="550" y="162" width="3" height="27" fill="#00FF00"/>
<rect x="551" y="163" width="1" height="25" fill="#000000"/>
<rect x="555" y="142" width="1" height="23" fill="#00FF00"/>
<rect x="554" y="151" width="3" height="11" fill="#00FF00"/>
<rect x="555" y="152" width="1" height="9" fill="#000000"/>
<rect x="559" y="147" width="1" height="37" fill="#00FF00"/>
<rect x="558" y="151" width="3" height="25" fill="#00FF00"/>
<rect x="559" y="152" width="1" height="23" fill="#FFFFFF"/>
<rect x="563" y="159" width="1" height="30" fill="#00FF00"/>
<rect x="562" y="179" width="3" height="8" fill="#00FF00"/>
<rect x="563" y="180" width="1" height="6" fill="#FFFFFF"/>
<rect x="567" y="168" width="1" height="20" fill="#00FF00"/>
<rect x="566" y="172" width="3" height="14" fill="#00FF00"/>
<rect x="567" y="173" width="1" height="12" fill="#000000"/>
<rect x="571" y="159" width="1" height="19" fill="#00FF00"/>
<rect x="570" y="162" width="3" height="13" fill="#00FF00"/>
<rect x="571" y="163" width="1" height="11" fill="#000000"/>
<rect x="575" y="150" width="1" height="33" fill="#00FF00"/>
<rect x="574" y="164" width="3" height="12" fill="#00FF00"/>
<rect x="575" y="165" width="1" height="10" fill="#FFFFFF"/>
<rect x="579" y="168" width="1" height="46" fill="#00FF00"/>
<rect x="578" y="175" width="3" height="32" fill="#00FF00"/>
<rect x="579" y="176" width="1" height="30" fill="#FFFFFF"/>
<rect x="583" y="206" width="1" height="39" fill="#00FF00"/>
<rect x="582" y="206" width="3" height="26" fill="#00FF00"/>
<rect x="583" y="207" width="1" height="24" fill="#FFFFFF"/>
<rect x="587" y="213" width="1" height="19" fill="#00FF00"/>
<rect x="586" y="220" width="3" height="11" fill="#00FF00"/>
<rect x="587" y="221" width="1" height="9" fill="#000000"/>
<rect x="591" y="216" width="1" height="13" fill="#00FF00"/>
<rect x="590" y="217" width="3" height="6" fill="#00FF00"/>
<rect x="591" y="218" width="1" height="4" fill="#000000"/>
<rect x="595" y="206" width="1" height="15" fill="#00FF00"/>
<rect x="594" y="209" width="3" height="9" fill="#00FF00"/>
<rect x="595" y="210" width="1" height="7" fill="#000000"/>
<rect x="599" y="204" width="1" height="77" fill="#00FF00"/>
<rect x="598" y="206" width="3" height="64" fill="#00FF00"/>
<rect x="599" y="207" width="1" height="62" fill="#FFFFFF"/>
<rect x="603" y="258" width="1" height="23" fill="#00FF00"/>
<rect x="602" y="259" width="3" height="11" fill="#00FF00"/>
<rect x="603" y="260" width="1" height="9" fill="#000000"/>
<rect x="607" y="249" width="1" height="18" fill="#00FF00"/>
<rect x="606" y="252" width="3" height="9" fill="#00FF00"/>
<rect x="607" y="253" width="1" height="7" fill="#000000"/>
<rect x="611" y="245" width="1" height="11" fill="#00FF00"/>
<rect x="610" y="248" width="3" height="5" fill="#00FF00"/>
<rect x="611" y="249" width="1" height="3" fill="#FFFFFF"/>
<rect x="615" y="245" width="1" height="14" fill="#00FF00"/>
<rect x="614" y="248" width="3" height="5" fill="#00FF00"/>
<rect x="615" y="249" width="1" height="3" fill="#000000"/>
<rect x="619" y="246" width="1" height="10" fill="#00FF00"/>
<rect x="618" y="248" width="3" height="5" fill="#00FF00"/>
<rect x="619" y="249" width="1" height="3" fill="#FFFFFF"/>
<rect x="623" y="244" width="1" height="15" fill="#00FF00"/>
<rect x="622" y="246" width="3" height="8" fill="#00FF00"/>
<rect x="623" y="247" width="1" height="6" fill="#000000"/>
<rect x="627" y="231" width="1" height="24" fill="#00FF00"/>
<rect x="626" y="231" width="3" height="18" fill="#00FF00"/>
<rect x="627" y="232" width="1" height="16" fill="#000000"/>
<rect x="631" y="220" width="1" height="29" fill="#00FF00"/>
<rect x="630" y="223" width="3" height="17" fill="#00FF00"/>
<rect x="631" y="224" width="1" height="15" fill="#000000"/>
<rect x="635" y="208" width="1" height="22" fill="#00FF00"/>
<rect x="634" y="216" width="3" height="5" fill="#00FF00"/>
<rect x="635" y="217" width="1" height="3" fill="#000000"/>
<rect x="639" y="212" width="1" height="33" fill="#00FF00"/>
<rect x="638" y="218" width="3" height="14" fill="#00FF00"/>
<rect x="639" y="219" width="1" height="12" fill="#FFFFFF"/>
<rect x="643" y="229" width="1" height="18" fill="#00FF00"/>
<rect x="642" y="230" width="3" height="15" fill="#00FF00"/>
<rect x="643" y="231" width="1" height="13" fill="#FFFFFF"/>
<rect x="647" y="233" width="1" height="16" fill="#00FF00"/>
<rect x="646" y="237" width="3" height="10" fill="#00FF00"/>
<rect x="647" y="238" width="1" height="8" fill="#000000"/>
<rect x="651" y="237" width="1" height="35" fill="#00FF00"/>
<rect x="650" y="238" width="3" height="21" fill="#00FF00"/>
<rect x="651" y="239" width="1" height="19" fill="#FFFFFF"/>
<rect x="655" y="254" width="1" height="66" fill="#00FF00"/>
<rect x="654" y="257" width="3" height="60" fill="#00FF00"/>
<rect x="655" y="258" width="1" height="58" fill="#FFFFFF"/>
<rect x="659" y="311" width="1" height="12" fill="#00FF00"/>
<rect x="658" y="315" width="3" height="7" fill="#00FF00"/>
<rect x="659" y="316" width="1" height="5" fill="#000000"/>
<rect x="663" y="299" width="1" height="27" fill="#00FF00"/>
<rect x="662" y="302" width="3" height="18" fill="#00FF00"/>
<rect x="663" y="303" width="1" height="16" fill="#FFFFFF"/>
<rect x="667" y="288" width="1" height="35" fill="#00FF00"/>
<rect x="666" y="291" width="3" height="15" fill="#00FF00"/>
<rect x="667" y="292" width="1" height="13" fill="#FFFFFF"/>
<rect x="671" y="284" width="1" height="45" fill="#00FF00"/>
<rect x="670" y="291" width="3" height="31" fill="#00FF00"/>
<rect x="671" y="292" width="1" height="29" fill="#FFFFFF"/>
<rect x="675" y="282" width="1" height="44" fill="#00FF00"/>
<rect x="674" y="299" width="3" height="24" fill="#00FF00"/>
<rect x="675" y="300" width="1" height="22" fill="#FFFFFF"/>
<rect x="679" y="285" width="1" height="55" fill="#00FF00"/>
<rect x="678" y="294" width="3" height="46" fill="#00FF00"/>
<rect x="679" y="295" width="1" height="44" fill="#FFFFFF"/>
<rect x="683" y="333" width="1" height="13" fill="#00FF00"/>
<rect x="682" y="336" width="3" height="7" fill="#00FF00"/>
<rect x="683" y="337" width="1" height="5" fill="#000000"/>
<rect x="687" y="328" width="1" height="35" fill="#00FF00"/>
<rect x="686" y="345" width="3" height="9" fill="#00FF00"/>
<rect x="687" y="346" width="1" height="7" fill="#000000"/>
<rect x="691" y="330" width="1" height="36" fill="#00FF00"/>
<rect x="690" y="342" width="3" height="12" fill="#00FF00"/>
<rect x="691" y="343" width="1" height="10" fill="#FFFFFF"/>
<rect x="695" y="319" width="1" height="38" fill="#00FF00"/>
<rect x="694" y="333" width="3" height="13" fill="#00FF00"/>
<rect x="695" y="334" width="1" height="11" fill="#000000"/>
<rect x="699" y="325" width="1" height="15" fill="#00FF00"/>
<rect x="698" y="330" width="3" height="10" fill="#00FF00"/>
<rect x="699" y="331" width="1" height="8" fill="#000000"/>
<rect x="703" y="305" width="1" height="24" fill="#00FF00"/>
<rect x="702" y="311" width="3" height="15" fill="#00FF00"/>
<rect x="703" y="312" width="1" height="13" fill="#FFFFFF"/>
<rect x="707" y="294" width="1" height="32" fill="#00FF00"/>
<rect x="706" y="317" width="3" height="9" fill="#00FF00"/>
<rect x="707" y="318" width="1" height="7" fill="#000000"/>
<rect x="711" y="315" width="1" height="12" fill="#00FF00"/>
<rect x="710" y="318" width="3" height="6" fill="#00FF00"/>
<rect x="711" y="319" width="1" height="4" fill="#000000"/>
<rect x="715" y="316" width="1" height="10" fill="#00FF00"/>
<rect x="714" y="318" width="3" height="7" fill="#00FF00"/>
<rect x="715" y="319" width="1" height="5" fill="#000000"/>
<rect x="719" y="318" width="1" height="8" fill="#00FF00"/>
<rect x="718" y="321" width="3" height="4" fill="#00FF00"/>
<rect x="719" y="322" width="1" height="2" fill="#000000"/>
<rect x="723" y="316" width="1" height="13" fill="#00FF00"/>
<rect x="722" y="324" width="3" height="3" fill="#00FF00"/>
<rect x="723" y="325" width="1" height="1" fill="#000000"/>
<rect x="727" y="328" width="1" height="66" fill="#00FF00"/>
<rect x="726" y="329" width="3" height="45" fill="#00FF00"/>
<rect x="727" y="330" width="1" height="43" fill="#FFFFFF"/>
<rect x="731" y="353" width="1" height="32" fill="#00FF00"/>
<rect x="730" y="367" width="3" height="10" fill="#00FF00"/>
<rect x="731" y="368" width="1" height="8" fill="#000000"/>
<rect x="735" y="359" width="1" height="29" fill="#00FF00"/>
<rect x="734" y="365" width="3" height="12" fill="#00FF00"/>
<rect x="735" y="366" width="1" height="10" fill="#FFFFFF"/>
<rect x="739" y="367" width="1" height="18" fill="#00FF00"/>
<rect x="738" y="372" width="3" height="8" fill="#00FF00"/>
<rect x="739" y="373" width="1" height="6" fill="#000000"/>
<rect x="743" y="370" width="1" height="21" fill="#00FF00"/>
<rect x="742" y="376" width="3" height="9" fill="#00FF00"/>
<rect x="743" y="377" width="1" height="7" fill="#FFFFFF"/>
<rect x="747" y="373" width="1" height="21" fill="#00FF00"/>
<rect x="746" y="376" width="3" height="7" fill="#00FF00"/>
<rect x="747" y="377" width="1" height="5" fill="#000000"/>
<rect x="751" y="365" width="1" height="23" fill="#00FF00"/>
<rect x="750" y="376" width="3" height="8" fill="#00FF00"/>
<rect x="751" y="377" width="1" height="6" fill="#000000"/>
<rect x="755" y="316" width="1" height="81" fill="#00FF00"/>
<rect x="754" y="322" width="3" height="55" fill="#00FF00"/>
<rect x="755" y="323" width="1" height="53" fill="#000000"/>
<rect x="759" y="314" width="1" height="49" fill="#00FF00"/>
<rect x="758" y="319" width="3" height="38" fill="#00FF00"/>
<rect x="759" y="320" width="1" height="36" fill="#FFFFFF"/>
<rect x="763" y="314" width="1" height="60" fill="#00FF00"/>
<rect x="762" y="322" width="3" height="12" fill="#00FF00"/>
<rect x="763" y="323" width="1" height="10" fill="#FFFFFF"/>
<rect x="767" y="316" width="1" height="18" fill="#00FF00"/>
<rect x="766" y="322" width="3" height="7" fill="#00FF00"/>
<rect x="767" y="323" width="1" height="5" fill="#000000"/>
<rect x="771" y="322" width="1" height="46" fill="#00FF00"/>
<rect x="770" y="325" width="3" height="41" fill="#00FF00"/>
<rect x="771" y="326" width="1" height="39" fill="#FFFFFF"/>
<rect x="775" y="322" width="1" height="12" fill="#00FF00"/>
<rect x="774" y="327" width="3" height="7" fill="#00FF00"/>
<rect x="775" y="328" width="1" height="5" fill="#000000"/>
<rect x="779" y="288" width="1" height="49" fill="#00FF00"/>
<rect x="778" y="294" width="3" height="37" fill="#00FF00"/>
<rect x="779" y="295" width="1" height="35" fill="#000000"/>
<rect x="783" y="285" width="1" height="18" fill="#00FF00"/>
<rect x="782" y="291" width="3" height="9" fill="#00FF00"/>
<rect x="783" y="292" width="1" height="7" fill="#000000"/>
<rect x="787" y="285" width="1" height="13" fill="#00FF00"/>
<rect x="786" y="291" width="3" height="6" fill="#00FF00"/>
<rect x="787" y="292" width="1" height="4" fill="#000000"/>
<rect x="791" y="274" width="1" height="26" fill="#00FF00"/>
<rect x="790" y="289" width="3" height="7" fill="#00FF00"/>
<rect x="791" y="290" width="1" height="5" fill="#FFFFFF"/>
<rect x="795" y="274" width="1" height="42" fill="#00FF00"/>
<rect x="794" y="287" width="3" height="9" fill="#00FF00"/>
<rect x="795" y="288" width="1" height="7" fill="#000000"/>
<rect x="799" y="279" width="1" height="36" fill="#00FF00"/>
<rect x="798" y="288" width="3" height="3" fill="#00FF00"/>
<rect x="799" y="289" width="1" height="1" fill="#000000"/>
<rect x="803" y="240" width="1" height="63" fill="#00FF00"/>
<rect x="802" y="263" width="3" height="28" fill="#00FF00"/>
<rect x="803" y="264" width="1" height="26" fill="#000000"/>
<rect x="807" y="258" width="1" height="33" fill="#00FF00"/>
<rect x="806" y="263" width="3" height="27" fill="#00FF00"/>
<rect x="807" y="264" width="1" height="25" fill="#FFFFFF"/>
<rect x="811" y="268" width="1" height="22" fill="#00FF00"/>
<rect x="810" y="268" width="3" height="21" fill="#00FF00"/>
<rect x="811" y="269" width="1" height="19" fill="#000000"/>
<rect x="815" y="262" width="1" height="20" fill="#00FF00"/>
<rect x="814" y="268" width="3" height="11" fill="#00FF00"/>
<rect x="815" y="269" width="1" height="9" fill="#FFFFFF"/>
<rect x="819" y="269" width="1" height="19" fill="#00FF00"/>
<rect x="818" y="274" width="3" height="5" fill="#00FF00"/>
<rect x="819" y="275" width="1" height="3" fill="#000000"/>
<rect x="823" y="245" width="1" height="51" fill="#00FF00"/>
<rect x="822" y="276" width="3" height="11" fill="#00FF00"/>
<rect x="823" y="277" width="1" height="9" fill="#FFFFFF"/>
<rect x="827" y="258" width="1" height="35" fill="#00FF00"/>
<rect x="826" y="262" width="3" height="26" fill="#00FF00"/>
<rect x="827" y="263" width="1" height="24" fill="#000000"/>
<rect x="831" y="258" width="1" height="19" fill="#00FF00"/>
<rect x="830" y="262" width="3" height="13" fill="#00FF00"/>
<rect x="831" y="263" width="1" height="11" fill="#FFFFFF"/>
<rect x="835" y="254" width="1" height="16" fill="#00FF00"/>
<rect x="834" y="257" width="3" height="12" fill="#00FF00"/>
<rect x="835" y="258" width="1" height="10" fill="#000000"/>
<rect x="839" y="254" width="1" height="13" fill="#00FF00"/>
<rect x="838" y="257" width="3" height="9" fill="#00FF00"/>
<rect x="839" y="258" width="1" height="7" fill="#FFFFFF"/>
<rect x="843" y="261" width="1" height="29" fill="#00FF00"/>
<rect x="842" y="267" width="3" height="21" fill="#00FF00"/>
<rect x="843" y="268" width="1" height="19" fill="#FFFFFF"/>
<rect x="847" y="241" width="1" height="47" fill="#00FF00"/>
<rect x="846" y="243" width="3" height="45" fill="#00FF00"/>
<rect x="847" y="244" width="1" height="43" fill="#000000"/>
<rect x="851" y="240" width="1" height="25" fill="#00FF00"/>
<rect x="850" y="244" width="3" height="20" fill="#00FF00"/>
<rect x="851" y="245" width="1" height="18" fill="#FFFFFF"/>
<rect x="855" y="261" width="1" height="19" fill="#00FF00"/>
<rect x="854" y="263" width="3" height="17" fill="#00FF00"/>
<rect x="855" y="264" width="1" height="15" fill="#FFFFFF"/>
<rect x="859" y="274" width="1" height="14" fill="#00FF00"/>
<rect x="858" y="280" width="3" height="3" fill="#00FF00"/>
<rect x="859" y="281" width="1" height="1" fill="#000000"/>
<rect x="863" y="268" width="1" height="15" fill="#00FF00"/>
<rect x="862" y="272" width="3" height="10" fill="#00FF00"/>
<rect x="863" y="273" width="1" height="8" fill="#000000"/>
<rect x="867" y="251" width="1" height="22" fill="#00FF00"/>
<rect x="866" y="253" width="3" height="19" fill="#00FF00"/>
<rect x="867" y="254" width="1" height="17" fill="#000000"/>
<rect x="871" y="245" width="1" height="20" fill="#00FF00"/>
<rect x="870" y="253" width="3" height="9" fill="#00FF00"/>
<rect x="871" y="254" width="1" height="7" fill="#FFFFFF"/>
<rect x="875" y="258" width="1" height="50" fill="#00FF00"/>
<rect x="874" y="260" width="3" height="44" fill="#00FF00"/>
<rect x="875" y="261" width="1" height="42" fill="#FFFFFF"/>
<rect x="879" y="290" width="1" height="29" fill="#00FF00"/>
<rect x="878" y="302" width="3" height="3" fill="#00FF00"/>
<rect x="879" y="303" width="1" height="1" fill="#000000"/>
<rect x="883" y="295" width="1" height="14" fill="#00FF00"/>
<rect x="882" y="296" width="3" height="8" fill="#00FF00"/>
<rect x="883" y="297" width="1" height="6" fill="#FFFFFF"/>
<rect x="887" y="286" width="1" height="12" fill="#00FF00"/>
<rect x="886" y="290" width="3" height="6" fill="#00FF00"/>
<rect x="887" y="291" width="1" height="4" fill="#000000"/>
<rect x="891" y="253" width="1" height="45" fill="#00FF00"/>
<rect x="890" y="262" width="3" height="28" fill="#00FF00"/>
<rect x="891" y="263" width="1" height="26" fill="#000000"/>
<rect x="895" y="254" width="1" height="31" fill="#00FF00"/>
<rect x="894" y="262" width="3" height="12" fill="#00FF00"/>
<rect x="895" y="263" width="1" height="10" fill="#FFFFFF"/>
<rect x="899" y="261" width="1" height="19" fill="#00FF00"/>
<rect x="898" y="273" width="3" height="3" fill="#00FF00"/>
<rect x="899" y="274" width="1" height="1" fill="#000000"/>
<rect x="903" y="266" width="1" height="21" fill="#00FF00"/>
<rect x="902" y="276" width="3" height="11" fill="#00FF00"/>
<rect x="903" y="277" width="1" height="9" fill="#FFFFFF"/>
<rect x="907" y="254" width="1" height="28" fill="#00FF00"/>
<rect x="906" y="264" width="3" height="16" fill="#00FF00"/>
<rect x="907" y="265" width="1" height="14" fill="#000000"/>
<rect x="911" y="250" width="1" height="17" fill="#00FF00"/>
<rect x="910" y="258" width="3" height="7" fill="#00FF00"/>
<rect x="911" y="259" width="1" height="5" fill="#000000"/>
<rect x="915" y="214" width="1" height="47" fill="#00FF00"/>
<rect x="914" y="217" width="3" height="42" fill="#00FF00"/>
<rect x="915" y="218" width="1" height="40" fill="#000000"/>
<rect x="919" y="195" width="1" height="41" fill="#00FF00"/>
<rect x="918" y="209" width="3" height="8" fill="#00FF00"/>
<rect x="919" y="210" width="1" height="6" fill="#000000"/>
<rect x="923" y="203" width="1" height="20" fill="#00FF00"/>
<rect x="922" y="210" width="3" height="9" fill="#00FF00"/>
<rect x="923" y="211" width="1" height="7" fill="#FFFFFF"/>
<rect x="927" y="210" width="1" height="26" fill="#00FF00"/>
<rect x="926" y="218" width="3" height="16" fill="#00FF00"/>
<rect x="927" y="219" width="1" height="14" fill="#FFFFFF"/>
<rect x="931" y="221" width="1" height="15" fill="#00FF00"/>
<rect x="930" y="222" width="3" height="12" fill="#00FF00"/>
<rect x="931" y="223" width="1" height="10" fill="#000000"/>
<rect x="935" y="210" width="1" height="24" fill="#00FF00"/>
<rect x="934" y="219" width="3" height="13" fill="#00FF00"/>
<rect x="935" y="220" width="1" height="11" fill="#000000"/>
<rect x="939" y="208" width="1" height="32" fill="#00FF00"/>
<rect x="938" y="220" width="3" height="9" fill="#00FF00"/>
<rect x="939" y="221" width="1" height="7" fill="#FFFFFF"/>
<rect x="943" y="157" width="1" height="74" fill="#00FF00"/>
<rect x="942" y="179" width="3" height="50" fill="#00FF00"/>
<rect x="943" y="180" width="1" height="48" fill="#000000"/>
<rect x="947" y="157" width="1" height="27" fill="#00FF00"/>
<rect x="946" y="173" width="3" height="7" fill="#00FF00"/>
<rect x="947" y="174" width="1" height="5" fill="#000000"/>
<rect x="951" y="171" width="1" height="26" fill="#00FF00"/>
<rect x="950" y="173" width="3" height="23" fill="#00FF00"/>
<rect x="951" y="174" width="1" height="21" fill="#FFFFFF"/>
<rect x="955" y="191" width="1" height="18" fill="#00FF00"/>
<rect x="954" y="201" width="3" height="4" fill="#00FF00"/>
<rect x="955" y="202" width="1" height="2" fill="#000000"/>
<rect x="959" y="194" width="1" height="15" fill="#00FF00"/>
<rect x="958" y="200" width="3" height="4" fill="#00FF00"/>
<rect x="959" y="201" width="1" height="2" fill="#000000"/>
<rect x="963" y="196" width="1" height="29" fill="#00FF00"/>
<rect x="962" y="200" width="3" height="4" fill="#00FF00"/>
<rect x="963" y="201" width="1" height="2" fill="#000000"/>
<rect x="967" y="183" width="1" height="26" fill="#00FF00"/>
<rect x="966" y="201" width="3" height="7" fill="#00FF00"/>
<rect x="967" y="202" width="1" height="5" fill="#FFFFFF"/>
<rect x="971" y="199" width="1" height="19" fill="#00FF00"/>
<rect x="970" y="200" width="3" height="9" fill="#00FF00"/>
<rect x="971" y="201" width="1" height="7" fill="#000000"/>
<rect x="975" y="196" width="1" height="15" fill="#00FF00"/>
<rect x="974" y="202" width="3" height="4" fill="#00FF00"/>
<rect x="975" y="203" width="1" height="2" fill="#FFFFFF"/>
<rect x="979" y="197" width="1" height="16" fill="#00FF00"/>
<rect x="978" y="205" width="3" height="3" fill="#00FF00"/>
<rect x="979" y="206" width="1" height="1" fill="#000000"/>
<rect x="983" y="196" width="1" height="13" fill="#00FF00"/>
<rect x="982" y="202" width="3" height="5" fill="#00FF00"/>
<rect x="983" y="203" width="1" height="3" fill="#000000"/>
<rect x="987" y="179" width="1" height="46" fill="#00FF00"/>
<rect x="986" y="202" width="3" height="4" fill="#00FF00"/>
<rect x="987" y="203" width="1" height="2" fill="#FFFFFF"/>
<rect x="991" y="204" width="1" height="45" fill="#00FF00"/>
<rect x="990" y="205" width="3" height="29" fill="#00FF00"/>
<rect x="991" y="206" width="1" height="27" fill="#FFFFFF"/>
<rect x="995" y="181" width="1" height="71" fill="#00FF00"/>
<rect x="994" y="209" width="3" height="25" fill="#00FF00"/>
<rect x="995" y="210" width="1" height="23" fill="#000000"/>
<rect x="999" y="188" width="1" height="30" fill="#00FF00"/>
<rect x="998" y="198" width="3" height="12" fill="#00FF00"/>
<rect x="999" y="199" width="1" height="10" fill="#000000"/>
<rect x="1003" y="194" width="1" height="17" fill="#00FF00"/>
<rect x="1002" y="198" width="3" height="8" fill="#00FF00"/>
<rect x="1003" y="199" width="1" height="6" fill="#FFFFFF"/>
<rect x="1007" y="194" width="1" height="10" fill="#00FF00"/>
<rect x="1006" y="197" width="3" height="4" fill="#00FF00"/>
<rect x="1007" y="198" width="1" height="2" fill="#000000"/>
<rect x="1011" y="162" width="1" height="40" fill="#00FF00"/>
<rect x="1010" y="193" width="3" height="8" fill="#00FF00"/>
<rect x="1011" y="194" width="1" height="6" fill="#000000"/>
<rect x="1015" y="175" width="1" height="20" fill="#00FF00"/>
<rect x="1014" y="188" width="3" height="6" fill="#00FF00"/>
<rect x="1015" y="189" width="1" height="4" fill="#000000"/>
<rect x="1019" y="125" width="1" height="67" fill="#00FF00"/>
<rect x="1018" y="134" width="3" height="55" fill="#00FF00"/>
<rect x="1019" y="135" width="1" height="53" fill="#000000"/>
<rect x="1023" y="131" width="1" height="17" fill="#00FF00"/>
<rect x="1022" y="132" width="3" height="14" fill="#00FF00"/>
<rect x="1023" y="133" width="1" height="12" fill="#FFFFFF"/>
<rect x="1027" y="128" width="1" height="20" fill="#00FF00"/>
<rect x="1026" y="132" width="3" height="13" fill="#00FF00"/>
<rect x="1027" y="133" width="1" height="11" fill="#000000"/>
<rect x="1031" y="128" width="1" height="20" fill="#00FF00"/>
<rect x="1030" y="131" width="3" height="12" fill="#00FF00"/>
<rect x="1031" y="132" width="1" height="10" fill="#000000"/>
<rect x="1035" y="125" width="1" height="20" fill="#00FF00"/>
<rect x="1034" y="129" width="3" height="12" fill="#00FF00"/>
<rect x="1035" y="130" width="1" height="10" fill="#FFFFFF"/>
<rect x="1039" y="55" width="1" height="71" fill="#00FF00"/>
<rect x="1038" y="84" width="3" height="42" fill="#00FF00"/>
<rect x="1039" y="85" width="1" height="40" fill="#FFFFFF"/>
</g>
<polygon points="103,181 111,188.8 111,194.6 105,189.2 105,200 101,200 101,189.2 95,194.6 95,188.8" fill="#000080"/>
<polygon points="287,311 295,318.8 295,324.6 289,319.2 289,330 285,330 285,319.2 279,324.6 279,318.8" fill="#000080"/>
<polygon points="367,215 375,222.8 375,228.6 369,223.2 369,234 365,234 365,223.2 359,228.6 359,222.8" fill="#000080"/>
<polygon points="439,334 447,341.8 447,347.6 441,342.2 441,353 437,353 437,342.2 431,347.6 431,341.8" fill="#000080"/>
<polygon points="511,231 519,238.8 519,244.6 513,239.2 513,250 509,250 509,239.2 503,244.6 503,238.8" fill="#000080"/>
<polygon points="755,401 763,408.8 763,414.6 757,409.2 757,420 753,420 753,409.2 747,414.6 747,408.8" fill="#000080"/>
<polygon points="915,291 923,298.8 923,304.6 917,299.2 917,310 913,310 913,299.2 907,304.6 907,298.8" fill="#000080"/>
<polygon points="1019,221 1027,228.8 1027,234.6 1021,229.2 1021,240 1017,240 1017,229.2 1011,234.6 1011,228.8" fill="#000080"/>
<polygon points="154,74 162,66.2 162,61 156,66.5 156,55 152,55 152,66.5 146,61 146,66.2" fill="#CD5C5C"/>
<polygon points="351,170.5 359,162.7 359,157.5 353,163 353,151.5 349,151.5 349,163 343,157.5 343,162.7" fill="#CD5C5C"/>
<polygon points="411,166.5 419,158.7 419,153.5 413,159 413,147.5 409,147.5 409,159 403,153.5 403,158.7" fill="#CD5C5C"/>
<polygon points="483,109.5 491,101.7 491,96.5 485,102 485,90.5 481,90.5 481,102 475,96.5 475,101.7" fill="#CD5C5C"/>
<polygon points="583,153.5 591,145.7 591,140.5 585,146 585,134.5 581,134.5 581,146 575,140.5 575,145.7" fill="#CD5C5C"/>
<polygon points="875,246.5 883,238.7 883,233.5 877,239 877,227.5 873,227.5 873,239 867,233.5 867,238.7" fill="#CD5C5C"/>
<polygon points="990,181.5 998,173.7 998,168.5 992,174 992,162.5 988,162.5 988,174 982,168.5 982,173.7" fill="#CD5C5C"/>
<rect x="1045" y="3" width="267" height="407" fill="#000"/>
<rect x="1045" y="66" width="267" height="1" fill="#778899" shape-rendering="crispEdges"/>
<g shape-rendering="crispEdges"><rect x="1042" y="65" width="3" height="21" fill="#00FF00"/><rect x="1043" y="66" width="1" height="19" fill="#000"/></g>
</g>
<g shape-rendering="crispEdges">
<rect x="2" y="457" width="3" height="4" fill="#00FF00"/>
<rect x="6" y="456" width="3" height="5" fill="#00FF00"/>
<rect x="10" y="457" width="3" height="4" fill="#00FF00"/>
<rect x="14" y="457" width="3" height="4" fill="#00FF00"/>
<rect x="18" y="457" width="3" height="4" fill="#00FF00"/>
<rect x="22" y="457" width="3" height="4" fill="#00FF00"/>
<rect x="26" y="458" width="3" height="3" fill="#00FF00"/>
<rect x="30" y="456" width="3" height="5" fill="#00FF00"/>
<rect x="34" y="454" width="3" height="7" fill="#00FF00"/>
<rect x="38" y="453" width="3" height="8" fill="#00FF00"/>
<rect x="42" y="453" width="3" height="8" fill="#00FF00"/>
<rect x="46" y="452" width="3" height="9" fill="#00FF00"/>
<rect x="50" y="452" width="3" height="9" fill="#00FF00"/>
<rect x="54" y="452" width="3" height="9" fill="#00FF00"/>
<rect x="58" y="454" width="3" height="7" fill="#00FF00"/>
<rect x="62" y="456" width="3" height="5" fill="#00FF00"/>
<rect x="66" y="458" width="3" height="3" fill="#00FF00"/>
<rect x="70" y="457" width="3" height="4" fill="#00FF00"/>
<rect x="74" y="459" width="3" height="2" fill="#00FF00"/>
<rect x="78" y="460" width="3" height="1" fill="#00FF00"/>
<rect x="82" y="460" width="3" height="1" fill="#00FF00"/>
<rect x="86" y="460" width="3" height="1" fill="#00FF00"/>
<rect x="90" y="461" width="3" height="2" fill="#FF0000"/>
<rect x="94" y="461" width="3" height="3" fill="#FF0000"/>
<rect x="98" y="461" width="3" height="4" fill="#FF0000"/>
<rect x="102" y="455" width="3" height="6" fill="#00FF00"/>
<rect x="106" y="449" width="3" height="12" fill="#00FF00"/>
<rect x="110" y="445" width="3" height="16" fill="#00FF00"/>
<rect x="114" y="443" width="3" height="18" fill="#00FF00"/>
<rect x="118" y="446" width="3" height="15" fill="#00FF00"/>
<rect x="122" y="449" width="3" height="12" fill="#00FF00"/>
<rect x="126" y="452" width="3" height="9" fill="#00FF00"/>
<rect x="130" y="456" width="3" height="5" fill="#00FF00"/>
<rect x="134" y="460" width="3" height="1" fill="#00FF00"/>
<rect x="138" y="461" width="3" height="4" fill="#FF0000"/>
<rect x="142" y="461" width="3" height="4" fill="#FF0000"/>
<rect x="146" y="461" width="3" height="4" fill="#FF0000"/>
<rect x="150" y="461" width="3" height="5" fill="#FF0000"/>
<rect x="154" y="461" width="3" height="6" fill="#FF0000"/>
<rect x="158" y="461" width="3" height="7" fill="#FF0000"/>
<rect x="162" y="461" width="3" height="7" fill="#FF0000"/>
<rect x="166" y="461" width="3" height="7" fill="#FF0000"/>
<rect x="170" y="461" width="3" height="6" fill="#FF0000"/>
<rect x="174" y="461" width="3" height="5" fill="#FF0000"/>
<rect x="178" y="461" width="3" height="6" fill="#FF0000"/>
<rect x="182" y="461" width="3" height="5" fill="#FF0000"/>
<rect x="186" y="461" width="3" height="5" fill="#FF0000"/>
<rect x="190" y="461" width="3" height="5" fill="#FF0000"/>
<rect x="194" y="461" width="3" height="5" fill="#FF0000"/>
<rect x="198" y="461" width="3" height="7" fill="#FF0000"/>
<rect x="202" y="461" width="3" height="7" fill="#FF0000"/>
<rect x="206" y="461" width="3" height="7" fill="#FF0000"/>
<rect x="210" y="461" width="3" height="8" fill="#FF0000"/>
<rect x="214" y="461" width="3" height="9" fill="#FF0000"/>
<rect x="218" y="461" width="3" height="9" fill="#FF0000"/>
<rect x="222" y="461" width="3" height="14" fill="#FF0000"/>
<rect x="226" y="461" width="3" height="17" fill="#FF0000"/>
<rect x="230" y="461" width="3" height="17" fill="#FF0000"/>
<rect x="234" y="461" width="3" height="17" fill="#FF0000"/>
<rect x="238" y="461" width="3" height="17" fill="#FF0000"/>
<rect x="242" y="461" width="3" height="16" fill="#FF0000"/>
<rect x="246" y="461" width="3" height="14" fill="#FF0000"/>
<rect x="250" y="461" width="3" height="11" fill="#FF0000"/>
<rect x="254" y="461" width="3" height="10" fill="#FF0000"/>
<rect x="258" y="461" width="3" height="9" fill="#FF0000"/>
<rect x="262" y="461" width="3" height="9" fill="#FF0000"/>
<rect x="266" y="461" width="3" height="6" fill="#FF0000"/>
<rect x="270" y="461" width="3" height="1" fill="#FF0000"/>
<rect x="274" y="457" width="3" height="4" fill="#00FF00"/>
<rect x="278" y="453" width="3" height="8" fill="#00FF00"/>
<rect x="282" y="451" width="3" height="10" fill="#00FF00"/>
<rect x="286" y="445" width="3" height="16" fill="#00FF00"/>
<rect x="290" y="441" width="3" height="20" fill="#00FF00"/>
<rect x="294" y="437" width="3" height="24" fill="#00FF00"/>
<rect x="298" y="435" width="3" height="26" fill="#00FF00"/>
<rect x="302" y="435" width="3" height="26" fill="#00FF00"/>
<rect x="306" y="437" width="3" height="24" fill="#00FF00"/>
<rect x="310" y="439" width="3" height="22" fill="#00FF00"/>
<rect x="314" y="439" width="3" height="22" fill="#00FF00"/>
<rect x="318" y="442" width="3" height="19" fill="#00FF00"/>
<rect x="322" y="446" width="3" height="15" fill="#00FF00"/>
<rect x="326" y="451" width="3" height="10" fill="#00FF00"/>
<rect x="330" y="453" width="3" height="8" fill="#00FF00"/>
<rect x="334" y="455" width="3" height="6" fill="#00FF00"/>
<rect x="338" y="457" width="3" height="4" fill="#00FF00"/>
<rect x="342" y="459" width="3" height="2" fill="#00FF00"/>
<rect x="346" y="461" width="3" height="2" fill="#FF0000"/>
<rect x="350" y="461" width="3" height="4" fill="#FF0000"/>
<rect x="354" y="461" width="3" height="4" fill="#FF0000"/>
<rect x="358" y="461" width="3" height="4" fill="#FF0000"/>
<rect x="362" y="461" width="3" height="2" fill="#FF0000"/>
<rect x="366" y="459" width="3" height="2" fill="#00FF00"/>
<rect x="370" y="459" width="3" height="2" fill="#00FF00"/>
<rect x="374" y="459" width="3" height="2" fill="#00FF00"/>
<rect x="378" y="459" width="3" height="2" fill="#00FF00"/>
<rect x="382" y="460" width="3" height="1" fill="#00FF00"/>
<rect x="386" y="461" width="3" height="1" fill="#FF0000"/>
<rect x="390" y="461" width="3" height="2" fill="#FF0000"/>
<rect x="394" y="461" width="3" height="2" fill="#FF0000"/>
<rect x="398" y="461" width="3" height="2" fill="#FF0000"/>
<rect x="402" y="461" width="3" height="1" fill="#FF0000"/>
<rect x="406" y="461" width="3" height="4" fill="#FF0000"/>
<rect x="410" y="461" width="3" height="8" fill="#FF0000"/>
<rect x="414" y="461" width="3" height="11" fill="#FF0000"/>
<rect x="418" y="461" width="3" height="11" fill="#FF0000"/>
<rect x="422" y="461" width="3" height="11" fill="#FF0000"/>
<rect x="426" y="461" width="3" height="10" fill="#FF0000"/>
<rect x="430" y="461" width="3" height="10" fill="#FF0000"/>
<rect x="434" y="461" width="3" height="17" fill="#FF0000"/>
<rect x="438" y="461" width="3" height="5" fill="#FF0000"/>
<rect x="442" y="457" width="3" height="4" fill="#00FF00"/>
<rect x="446" y="452" width="3" height="9" fill="#00FF00"/>
<rect x="450" y="449" width="3" height="12" fill="#00FF00"/>
<rect x="454" y="444" width="3" height="17" fill="#00FF00"/>
<rect x="458" y="444" width="3" height="17" fill="#00FF00"/>
<rect x="462" y="444" width="3" height="17" fill="#00FF00"/>
<rect x="466" y="447" width="3" height="14" fill="#00FF00"/>
<rect x="470" y="451" width="3" height="10" fill="#00FF00"/>
<rect x="474" y="454" width="3" height="7" fill="#00FF00"/>
<rect x="478" y="458" width="3" height="3" fill="#00FF00"/>
<rect x="482" y="461" width="3" height="6" fill="#FF0000"/>
<rect x="486" y="461" width="3" height="13" fill="#FF0000"/>
<rect x="490" y="461" width="3" height="18" fill="#FF0000"/>
<rect x="494" y="461" width="3" height="19" fill="#FF0000"/>
<rect x="498" y="461" width="3" height="19" fill="#FF0000"/>
<rect x="502" y="461" width="3" height="17" fill="#FF0000"/>
<rect x="506" y="461" width="3" height="14" fill="#FF0000"/>
<rect x="510" y="461" width="3" height="4" fill="#FF0000"/>
<rect x="514" y="459" width="3" height="2" fill="#00FF00"/>
<rect x="518" y="453" width="3" height="8" fill="#00FF00"/>
<rect x="522" y="451" width="3" height="10" fill="#00FF00"/>
<rect x="526" y="455" width="3" height="6" fill="#00FF00"/>
<rect x="530" y="453" width="3" height="8" fill="#00FF00"/>
<rect x="534" y="453" width="3" height="8" fill="#00FF00"/>
<rect x="538" y="459" width="3" height="2" fill="#00FF00"/>
<rect x="542" y="461" width="3" height="4" fill="#FF0000"/>
<rect x="546" y="461" width="3" height="5" fill="#FF0000"/>
<rect x="550" y="461" width="3" height="3" fill="#FF0000"/>
<rect x="554" y="460" width="3" height="1" fill="#00FF00"/>
<rect x="558" y="461" width="3" height="1" fill="#FF0000"/>
<rect x="562" y="461" width="3" height="1" fill="#FF0000"/>
<rect x="566" y="461" width="3" height="1" fill="#FF0000"/>
<rect x="570" y="460" width="3" height="1" fill="#00FF00"/>
<rect x="574" y="460" width="3" height="1" fill="#00FF00"/>
<rect x="578" y="461" width="3" height="3" fill="#FF0000"/>
<rect x="582" y="461" width="3" height="7" fill="#FF0000"/>
<rect x="586" y="461" width="3" height="10" fill="#FF0000"/>
<rect x="590" y="461" width="3" height="10" fill="#FF0000"/>
<rect x="594" y="461" width="3" height="11" fill="#FF0000"/>
<rect x="598" y="461" width="3" height="13" fill="#FF0000"/>
<rect x="602" y="461" width="3" height="13" fill="#FF0000"/>
<rect x="606" y="461" width="3" height="13" fill="#FF0000"/>
<rect x="610" y="461" width="3" height="11" fill="#FF0000"/>
<rect x="614" y="461" width="3" height="10" fill="#FF0000"/>
<rect x="618" y="461" width="3" height="7" fill="#FF0000"/>
<rect x="622" y="461" width="3" height="5" fill="#FF0000"/>
<rect x="626" y="461" width="3" height="1" fill="#FF0000"/>
<rect x="630" y="458" width="3" height="3" fill="#00FF00"/>
<rect x="634" y="456" width="3" height="5" fill="#00FF00"/>
<rect x="638" y="454" width="3" height="7" fill="#00FF00"/>
<rect x="642" y="456" width="3" height="5" fill="#00FF00"/>
<rect x="646" y="457" width="3" height="4" fill="#00FF00"/>
<rect x="650" y="459" width="3" height="2" fill="#00FF00"/>
<rect x="654" y="461" width="3" height="5" fill="#FF0000"/>
<rect x="658" y="461" width="3" height="9" fill="#FF0000"/>
<rect x="662" y="461" width="3" height="12" fill="#FF0000"/>
<rect x="666" y="461" width="3" height="11" fill="#FF0000"/>
<rect x="670" y="461" width="3" height="11" fill="#FF0000"/>
<rect x="674" y="461" width="3" height="10" fill="#FF0000"/>
<rect x="678" y="461" width="3" height="11" fill="#FF0000"/>
<rect x="682" y="461" width="3" height="11" fill="#FF0000"/>
<rect x="686" y="461" width="3" height="10" fill="#FF0000"/>
<rect x="690" y="461" width="3" height="8" fill="#FF0000"/>
<rect x="694" y="461" width="3" height="6" fill="#FF0000"/>
<rect x="698" y="461" width="3" height="3" fill="#FF0000"/>
<rect x="702" y="459" width="3" height="2" fill="#00FF00"/>
<rect x="706" y="457" width="3" height="4" fill="#00FF00"/>
<rect x="710" y="455" width="3" height="6" fill="#00FF00"/>
<rect x="714" y="454" width="3" height="7" fill="#00FF00"/>
<rect x="718" y="453" width="3" height="8" fill="#00FF00"/>
<rect x="722" y="454" width="3" height="7" fill="#00FF00"/>
<rect x="726" y="458" width="3" height="3" fill="#00FF00"/>
<rect x="730" y="460" width="3" height="1" fill="#00FF00"/>
<rect x="734" y="461" width="3" height="3" fill="#FF0000"/>
<rect x="738" y="461" width="3" height="4" fill="#FF0000"/>
<rect x="742" y="461" width="3" height="5" fill="#FF0000"/>
<rect x="746" y="461" width="3" height="5" fill="#FF0000"/>
<rect x="750" y="461" width="3" height="4" fill="#FF0000"/>
<rect x="754" y="457" width="3" height="4" fill="#00FF00"/>
<rect x="758" y="454" width="3" height="7" fill="#00FF00"/>
<rect x="762" y="450" width="3" height="11" fill="#00FF00"/>
<rect x="766" y="448" width="3" height="13" fill="#00FF00"/>
<rect x="770" y="451" width="3" height="10" fill="#00FF00"/>
<rect x="774" y="450" width="3" height="11" fill="#00FF00"/>
<rect x="778" y="447" width="3" height="14" fill="#00FF00"/>
<rect x="782" y="446" width="3" height="15" fill="#00FF00"/>
<rect x="786" y="446" width="3" height="15" fill="#00FF00"/>
<rect x="790" y="447" width="3" height="14" fill="#00FF00"/>
<rect x="794" y="447" width="3" height="14" fill="#00FF00"/>
<rect x="798" y="448" width="3" height="13" fill="#00FF00"/>
<rect x="802" y="448" width="3" height="13" fill="#00FF00"/>
<rect x="806" y="450" width="3" height="11" fill="#00FF00"/>
<rect x="810" y="451" width="3" height="10" fill="#00FF00"/>
<rect x="814" y="453" width="3" height="8" fill="#00FF00"/>
<rect x="818" y="455" width="3" height="6" fill="#00FF00"/>
<rect x="822" y="457" width="3" height="4" fill="#00FF00"/>
<rect x="826" y="457" width="3" height="4" fill="#00FF00"/>
<rect x="830" y="458" width="3" height="3" fill="#00FF00"/>
<rect x="834" y="458" width="3" height="3" fill="#00FF00"/>
<rect x="838" y="459" width="3" height="2" fill="#00FF00"/>
<rect x="842" y="461" width="3" height="1" fill="#FF0000"/>
<rect x="846" y="460" width="3" height="1" fill="#00FF00"/>
<rect x="850" y="460" width="3" height="1" fill="#00FF00"/>
<rect x="854" y="461" width="3" height="2" fill="#FF0000"/>
<rect x="858" y="461" width="3" height="4" fill="#FF0000"/>
<rect x="862" y="461" width="3" height="5" fill="#FF0000"/>
<rect x="866" y="461" width="3" height="3" fill="#FF0000"/>
<rect x="870" y="461" width="3" height="3" fill="#FF0000"/>
<rect x="874" y="461" width="3" height="6" fill="#FF0000"/>
<rect x="878" y="461" width="3" height="9" fill="#FF0000"/>
<rect x="882" y="461" width="3" height="9" fill="#FF0000"/>
<rect x="886" y="461" width="3" height="9" fill="#FF0000"/>
<rect x="890" y="461" width="3" height="6" fill="#FF0000"/>
<rect x="894" y="461" width="3" height="4" fill="#FF0000"/>
<rect x="898" y="461" width="3" height="4" fill="#FF0000"/>
<rect x="902" y="461" width="3" height="4" fill="#FF0000"/>
<rect x="906" y="461" width="3" height="1" fill="#FF0000"/>
<rect x="910" y="460" width="3" height="1" fill="#00FF00"/>
<rect x="914" y="455" width="3" height="6" fill="#00FF00"/>
<rect x="918" y="452" width="3" height="9" fill="#00FF00"/>
<rect x="922" y="451" width="3" height="10" fill="#00FF00"/>
<rect x="926" y="452" width="3" height="9" fill="#00FF00"/>
<rect x="930" y="454" width="3" height="7" fill="#00FF00"/>
<rect x="934" y="454" width="3" height="7" fill="#00FF00"/>
<rect x="938" y="456" width="3" height="5" fill="#00FF00"/>
<rect x="942" y="454" width="3" height="7" fill="#00FF00"/>
<rect x="946" y="452" width="3" height="9" fill="#00FF00"/>
<rect x="950" y="454" width="3" height="7" fill="#00FF00"/>
<rect x="954" y="456" width="3" height="5" fill="#00FF00"/>
<rect x="958" y="458" width="3" height="3" fill="#00FF00"/>
<rect x="962" y="458" width="3" height="3" fill="#00FF00"/>
<rect x="966" y="461" width="3" height="2" fill="#FF0000"/>
<rect x="970" y="461" width="3" height="3" fill="#FF0000"/>
<rect x="974" y="461" width="3" height="5" fill="#FF0000"/>
<rect x="978" y="461" width="3" height="5" fill="#FF0000"/>
<rect x="982" y="461" width="3" height="5" fill="#FF0000"/>
<rect x="986" y="461" width="3" height="5" fill="#FF0000"/>
<rect x="990" y="461" width="3" height="9" fill="#FF0000"/>
<rect x="994" y="461" width="3" height="8" fill="#FF0000"/>
<rect x="998" y="461" width="3" height="5" fill="#FF0000"/>
<rect x="1002" y="461" width="3" height="5" fill="#FF0000"/>
<rect x="1006" y="461" width="3" height="4" fill="#FF0000"/>
<rect x="1010" y="461" width="3" height="3" fill="#FF0000"/>
<rect x="1014" y="461" width="3" height="2" fill="#FF0000"/>
<rect x="1018" y="456" width="3" height="5" fill="#00FF00"/>
<rect x="1022" y="454" width="3" height="7" fill="#00FF00"/>
<rect x="1026" y="451" width="3" height="10" fill="#00FF00"/>
<rect x="1030" y="452" width="3" height="9" fill="#00FF00"/>
<rect x="1034" y="451" width="3" height="10" fill="#00FF00"/>
<rect x="1038" y="448" width="3" height="13" fill="#00FF00"/>
<rect x="1042" y="445" width="3" height="16" fill="#00FF00"/>
</g>
<rect x="3" y="438" width="1309" height="1" fill="#C0C0C0" shape-rendering="crispEdges"/>
<polyline points="3,474.3 15,476 28,477 45,479 64,480 80,482 100,482.6 130,483.9 160,483.9 180,484.6 200,485.5 213,486.4 225,487.3 237,490 245,491 260,495.4 275,499 290,502 310,503.4 340,504 390,503.4 420,502 450,499 470,497 500,495.5 520,491.3 544,488 569.6,485.3 599.4,483.2 619,482.5 650,482 678.4,484 706.7,488 735,492.4 757.8,498 783,499.6 808,499.6 830,498.4 855,497 880,495.4 900,493 910,491.5 925,489.6 940,487 955,483.6 970,479 990,474 1005,470 1015,466.8 1030,461 1043,455.0" fill="none" stroke="#D8D8D8" stroke-width="1" stroke-dasharray="3,3"/>
<polyline points="3,498 15,498 28,496 35,492 45,484 57,480 70,478.6 85,478 100,477 106,474 113,469 120,463 127,460 130,458 147,458 160,459.5 170,461.3 180,464 190,467.6 200,470 210,473 217,479 225,483.7 232,492 240,497.6 248,501.5 260,508 268.5,513.7 278.4,512.3 287,508 292.6,502.3 298.3,496.7 302.6,489.6 306.8,484 312.5,478 316.7,472.6 322.4,466.9 328,462 333.8,458.4 341,455.5 348,453.4 359.3,452.7 367.8,451.3 390,451.3 405.6,451.3 418.4,457 429.7,462.6 436.8,465.5 446.7,463.3 455.2,458.4 463.8,451.3 472.3,447 479.4,444.9 487.9,448.4 497.8,455.5 507.7,462.6 520,459 541,457 576.7,458.4 583.8,461.2 591,463.3 598,466 603.7,469.7 610.8,474.7 622,479.6 627.8,481 636.3,480.4 650,478.5 658.5,481 671,486 682.6,491.7 689.7,495.2 698,498 711,496 721,493 729.4,493 742,495.2 752,496 760.6,491.7 772,484.6 783,477.7 790,471.6 800,463.5 808,457.7 820,450.6 832,446 845,445.6 858,445.6 870,446.3 880,447.7 890,451.3 900,454 910,455.3 918,450.7 928,446 940,442 950,438.3 960,437.7 975,437.7 990,440.3 1000,443 1015,444.4 1025,442 1035,439 1043,433.6" fill="none" stroke="#D8D8D8" stroke-width="1" stroke-dasharray="3,3"/>
<polyline points="3,483 15,484 28,486 45,487 57,489 71,490.6 88,490.6 100,488 108,485.5 130,484.6 160,484.6 165,486 178,486 185,488 200,489.5 210,493.6 225,500 235,504.6 245,509 255,513.5 260,516 270,518.7 283,518.7 295,516 310,513.7 330,510 348,509.0" fill="none" stroke="#FFA500" stroke-width="2" stroke-linejoin="round"/>
<polyline points="348,509 360,505 380,500.6 390,499.6 420,499 430,495.4 445,492 460,487 470,483.7 480,485 490,486 500,483 510,480 520,478 528,477.4 545,475.4 560,474 565,473 570,474.5 587,474.5 595,476.5 605,478 630,478 635,476.5" fill="none" stroke="#00E5FF" stroke-width="2" stroke-linejoin="round"/>
<polyline points="635,476.5 640,479 650,482.5 670,489 685,495 700,499 710,503.4 725,507 740,510 760,510 770,507.4 780,506 795,502 808,499.6" fill="none" stroke="#FFA500" stroke-width="2" stroke-linejoin="round"/>
<polyline points="808,499.6 820,496.5 840,491.6 855,488.4 870,486.7 885,484.6 900,481 910,480 925,474.7 940,468.7 955,462 970,455 985,450 1000,446.3 1015,439 1025,434.7 1035,427 1043,419.8" fill="none" stroke="#00E5FF" stroke-width="2" stroke-linejoin="round"/>
<polyline points="3,497.6 15,496.5 28,494 35,487.5 43,483 50,478 57,476 63,476 67,477 71,475 85,475 91,477.0" fill="none" stroke="#10C010" stroke-width="2" stroke-linejoin="round"/>
<polyline points="91,477 99,479 101,477.0" fill="none" stroke="#FF0000" stroke-width="2" stroke-linejoin="round"/>
<polyline points="101,477 108,461 117,450 127,451.5 133,456 147,456.9" fill="none" stroke="#10C010" stroke-width="2" stroke-linejoin="round"/>
<polyline points="147,456.9 150,458 160,462.8 173,467.6 178,470 190,472 195,473 200,476.5 210,481.6 220,486.7 223,491 227,497 230,501 235,503.5 243,512 250,514 260,518 270,516.0" fill="none" stroke="#FF0000" stroke-width="2" stroke-linejoin="round"/>
<polyline points="270,516 272,514 285,502 290,493 298,475 305,468 312,462.6 315,458 322,452 330,449.6 340,449.6 343,448.5 350,453 353,454.0" fill="none" stroke="#10C010" stroke-width="2" stroke-linejoin="round"/>
<polyline points="353,454 355,454.6 360,454.0" fill="none" stroke="#FF0000" stroke-width="2" stroke-linejoin="round"/>
<polyline points="360,454 365,453 370,448.5 380,448.5 385,450 388,451.0" fill="none" stroke="#10C010" stroke-width="2" stroke-linejoin="round"/>
<polyline points="388,451 403,451 412.7,460.5 418.4,462 426.9,462.6 431,464 435.4,475.4 439.6,468.3" fill="none" stroke="#FF0000" stroke-width="2" stroke-linejoin="round"/>
<polyline points="439.6,468.3 446.7,461.2 453.8,448.4 459.5,442 465,440 476.5,440 480.8,441.3" fill="none" stroke="#10C010" stroke-width="2" stroke-linejoin="round"/>
<polyline points="480.8,441.3 489.3,458.4 497.8,469.7 506.3,472.6 510.6,466.9" fill="none" stroke="#FF0000" stroke-width="2" stroke-linejoin="round"/>
<polyline points="510.6,466.9 520,454 538,456.0" fill="none" stroke="#10C010" stroke-width="2" stroke-linejoin="round"/>
<polyline points="538,456 545,460 552,458.0" fill="none" stroke="#FF0000" stroke-width="2" stroke-linejoin="round"/>
<polyline points="552,458 560,456.2" fill="none" stroke="#10C010" stroke-width="2" stroke-linejoin="round"/>
<polyline points="560,457.5 572,457.7" fill="none" stroke="#FF0000" stroke-width="2" stroke-linejoin="round"/>
<polyline points="572,457.5 576,456.5" fill="none" stroke="#10C010" stroke-width="2" stroke-linejoin="round"/>
<polyline points="576,457 582.4,464 588,468.3 595.2,471 599.4,477.5 606.5,484 613.6,485.3 622,486 627.8,484 633.5,478.2" fill="none" stroke="#FF0000" stroke-width="2" stroke-linejoin="round"/>
<polyline points="633.5,478.2 637.7,476 650,477.0" fill="none" stroke="#10C010" stroke-width="2" stroke-linejoin="round"/>
<polyline points="650,477 653,479.6 660,490 668,491 675,494.6 680,499 688,502.8 697,502.8 700,500 705,496.5" fill="none" stroke="#FF0000" stroke-width="2" stroke-linejoin="round"/>
<polyline points="705,496.5 715,491 722,488.4 727,490.6 730,492.0" fill="none" stroke="#10C010" stroke-width="2" stroke-linejoin="round"/>
<polyline points="730,492 738,495 750,496 752,493.6" fill="none" stroke="#FF0000" stroke-width="2" stroke-linejoin="round"/>
<polyline points="752,493.6 760,485 767,478 773,477.4 778,472.6 780,469 790,459.8 800,448 810,447 820,444.9 830,443.5 835,443 840,441.3 845,444.9 850,443.5 852,443.5" fill="none" stroke="#10C010" stroke-width="2" stroke-linejoin="round"/>
<polyline points="852,443.5 858,446 874,446 883,456 890,457 895,455 905,456.4 910,455.0" fill="none" stroke="#FF0000" stroke-width="2" stroke-linejoin="round"/>
<polyline points="910,455 925,443 935,441.8 942,439 948,435 950,431.4 960,433 966,435 968,436.0" fill="none" stroke="#10C010" stroke-width="2" stroke-linejoin="round"/>
<polyline points="968,436 975,437 980,439.5 988,442 993,447 1015,447 1017,445.0" fill="none" stroke="#FF0000" stroke-width="2" stroke-linejoin="round"/>
<polyline points="1017,445 1025,437 1032,433 1037,431 1043,422.0" fill="none" stroke="#10C010" stroke-width="2" stroke-linejoin="round"/>
<g shape-rendering="crispEdges">
<rect x="3" y="580" width="2" height="3" fill="#00FF00"/>
<rect x="5" y="580" width="4" height="3" fill="#00FF00"/>
<rect x="9" y="581" width="4" height="2" fill="#00FF00"/>
<rect x="13" y="581" width="4" height="2" fill="#00FF00"/>
<rect x="17" y="582" width="4" height="1" fill="#00FF00"/>
<rect x="21" y="583" width="4" height="2" fill="#FF0000"/>
<rect x="25" y="583" width="4" height="3" fill="#FF0000"/>
<rect x="29" y="583" width="4" height="2" fill="#FF0000"/>
<rect x="33" y="582" width="4" height="1" fill="#00FF00"/>
<rect x="37" y="581" width="4" height="2" fill="#00FF00"/>
<rect x="41" y="581" width="4" height="2" fill="#00FF00"/>
<rect x="45" y="580" width="4" height="3" fill="#00FF00"/>
<rect x="49" y="580" width="4" height="3" fill="#00FF00"/>
<rect x="53" y="579" width="4" height="4" fill="#00FF00"/>
<rect x="57" y="580" width="4" height="3" fill="#00FF00"/>
<rect x="61" y="582" width="4" height="1" fill="#00FF00"/>
<rect x="65" y="583" width="4" height="2" fill="#FF0000"/>
<rect x="69" y="583" width="4" height="2" fill="#FF0000"/>
<rect x="73" y="583" width="4" height="2" fill="#FF0000"/>
<rect x="77" y="583" width="4" height="3" fill="#FF0000"/>
<rect x="81" y="583" width="4" height="4" fill="#FF0000"/>
<rect x="85" y="583" width="4" height="4" fill="#FF0000"/>
<rect x="89" y="583" width="4" height="5" fill="#FF0000"/>
<rect x="93" y="583" width="4" height="6" fill="#FF0000"/>
<rect x="97" y="583" width="4" height="7" fill="#FF0000"/>
<rect x="101" y="554" width="4" height="29" fill="#00FF00"/>
<rect x="105" y="547" width="4" height="36" fill="#00FF00"/>
<rect x="109" y="555" width="4" height="28" fill="#00FF00"/>
<rect x="113" y="564" width="4" height="19" fill="#00FF00"/>
<rect x="117" y="573" width="4" height="10" fill="#00FF00"/>
<rect x="121" y="581" width="4" height="2" fill="#00FF00"/>
<rect x="125" y="583" width="4" height="3" fill="#FF0000"/>
<rect x="129" y="583" width="4" height="13" fill="#FF0000"/>
<rect x="133" y="583" width="4" height="12" fill="#FF0000"/>
<rect x="137" y="583" width="4" height="12" fill="#FF0000"/>
<rect x="141" y="583" width="4" height="11" fill="#FF0000"/>
<rect x="145" y="583" width="4" height="8" fill="#FF0000"/>
<rect x="149" y="583" width="4" height="7" fill="#FF0000"/>
<rect x="153" y="583" width="4" height="7" fill="#FF0000"/>
<rect x="157" y="583" width="4" height="7" fill="#FF0000"/>
<rect x="161" y="583" width="4" height="8" fill="#FF0000"/>
<rect x="165" y="583" width="4" height="7" fill="#FF0000"/>
<rect x="169" y="583" width="4" height="7" fill="#FF0000"/>
<rect x="173" y="583" width="4" height="7" fill="#FF0000"/>
<rect x="177" y="583" width="4" height="7" fill="#FF0000"/>
<rect x="181" y="583" width="4" height="7" fill="#FF0000"/>
<rect x="185" y="583" width="4" height="6" fill="#FF0000"/>
<rect x="189" y="583" width="4" height="5" fill="#FF0000"/>
<rect x="193" y="583" width="4" height="5" fill="#FF0000"/>
<rect x="197" y="583" width="4" height="9" fill="#FF0000"/>
<rect x="201" y="583" width="4" height="9" fill="#FF0000"/>
<rect x="205" y="583" width="4" height="9" fill="#FF0000"/>
<rect x="209" y="583" width="4" height="11" fill="#FF0000"/>
<rect x="213" y="583" width="4" height="13" fill="#FF0000"/>
<rect x="217" y="583" width="4" height="13" fill="#FF0000"/>
<rect x="221" y="583" width="4" height="59" fill="#FF0000"/>
<rect x="225" y="583" width="4" height="51" fill="#FF0000"/>
<rect x="229" y="583" width="4" height="30" fill="#FF0000"/>
<rect x="233" y="583" width="4" height="18" fill="#FF0000"/>
<rect x="237" y="583" width="4" height="14" fill="#FF0000"/>
<rect x="241" y="583" width="4" height="14" fill="#FF0000"/>
<rect x="245" y="583" width="4" height="10" fill="#FF0000"/>
<rect x="249" y="583" width="4" height="7" fill="#FF0000"/>
<rect x="253" y="583" width="4" height="7" fill="#FF0000"/>
<rect x="257" y="583" width="4" height="16" fill="#FF0000"/>
<rect x="261" y="583" width="4" height="12" fill="#FF0000"/>
<rect x="265" y="583" width="4" height="10" fill="#FF0000"/>
<rect x="269" y="583" width="4" height="6" fill="#FF0000"/>
<rect x="273" y="582" width="4" height="1" fill="#00FF00"/>
<rect x="277" y="580" width="4" height="3" fill="#00FF00"/>
<rect x="281" y="577" width="4" height="6" fill="#00FF00"/>
<rect x="285" y="554" width="4" height="29" fill="#00FF00"/>
<rect x="289" y="545" width="4" height="38" fill="#00FF00"/>
<rect x="293" y="545" width="4" height="38" fill="#00FF00"/>
<rect x="297" y="551" width="4" height="32" fill="#00FF00"/>
<rect x="301" y="560" width="4" height="23" fill="#00FF00"/>
<rect x="305" y="569" width="4" height="14" fill="#00FF00"/>
<rect x="309" y="574" width="4" height="9" fill="#00FF00"/>
<rect x="313" y="566" width="4" height="17" fill="#00FF00"/>
<rect x="317" y="572" width="4" height="11" fill="#00FF00"/>
<rect x="321" y="577" width="4" height="6" fill="#00FF00"/>
<rect x="325" y="581" width="4" height="2" fill="#00FF00"/>
<rect x="329" y="583" width="4" height="2" fill="#FF0000"/>
<rect x="333" y="583" width="4" height="3" fill="#FF0000"/>
<rect x="337" y="583" width="4" height="5" fill="#FF0000"/>
<rect x="341" y="583" width="4" height="3" fill="#FF0000"/>
<rect x="345" y="583" width="4" height="3" fill="#FF0000"/>
<rect x="349" y="583" width="4" height="6" fill="#FF0000"/>
<rect x="353" y="583" width="4" height="6" fill="#FF0000"/>
<rect x="357" y="583" width="4" height="5" fill="#FF0000"/>
<rect x="361" y="583" width="4" height="3" fill="#FF0000"/>
<rect x="365" y="581" width="4" height="2" fill="#00FF00"/>
<rect x="369" y="580" width="4" height="3" fill="#00FF00"/>
<rect x="373" y="580" width="4" height="3" fill="#00FF00"/>
<rect x="377" y="580" width="4" height="3" fill="#00FF00"/>
<rect x="381" y="581" width="4" height="2" fill="#00FF00"/>
<rect x="385" y="582" width="4" height="1" fill="#00FF00"/>
<rect x="389" y="582" width="4" height="1" fill="#00FF00"/>
<rect x="393" y="582" width="4" height="1" fill="#00FF00"/>
<rect x="397" y="582" width="4" height="1" fill="#00FF00"/>
<rect x="401" y="582" width="4" height="1" fill="#00FF00"/>
<rect x="405" y="582" width="4" height="1" fill="#00FF00"/>
<rect x="409" y="583" width="4" height="13" fill="#FF0000"/>
<rect x="413" y="583" width="4" height="13" fill="#FF0000"/>
<rect x="417" y="583" width="4" height="12" fill="#FF0000"/>
<rect x="421" y="583" width="4" height="10" fill="#FF0000"/>
<rect x="425" y="583" width="4" height="8" fill="#FF0000"/>
<rect x="429" y="583" width="4" height="5" fill="#FF0000"/>
<rect x="433" y="583" width="4" height="49" fill="#FF0000"/>
<rect x="437" y="553" width="4" height="30" fill="#00FF00"/>
<rect x="441" y="534" width="4" height="49" fill="#00FF00"/>
<rect x="445" y="543" width="4" height="40" fill="#00FF00"/>
<rect x="449" y="556" width="4" height="27" fill="#00FF00"/>
<rect x="453" y="551" width="4" height="32" fill="#00FF00"/>
<rect x="457" y="564" width="4" height="19" fill="#00FF00"/>
<rect x="461" y="574" width="4" height="9" fill="#00FF00"/>
<rect x="465" y="578" width="4" height="5" fill="#00FF00"/>
<rect x="469" y="582" width="4" height="1" fill="#00FF00"/>
<rect x="473" y="583" width="4" height="3" fill="#FF0000"/>
<rect x="477" y="583" width="4" height="5" fill="#FF0000"/>
<rect x="481" y="583" width="4" height="27" fill="#FF0000"/>
<rect x="485" y="583" width="4" height="60" fill="#FF0000"/>
<rect x="489" y="583" width="4" height="47" fill="#FF0000"/>
<rect x="493" y="583" width="4" height="29" fill="#FF0000"/>
<rect x="497" y="583" width="4" height="17" fill="#FF0000"/>
<rect x="501" y="583" width="4" height="10" fill="#FF0000"/>
<rect x="505" y="583" width="4" height="3" fill="#FF0000"/>
<rect x="509" y="546" width="4" height="37" fill="#00FF00"/>
<rect x="513" y="546" width="4" height="37" fill="#00FF00"/>
<rect x="517" y="555" width="4" height="28" fill="#00FF00"/>
<rect x="521" y="564" width="4" height="19" fill="#00FF00"/>
<rect x="525" y="572" width="4" height="11" fill="#00FF00"/>
<rect x="529" y="577" width="4" height="6" fill="#00FF00"/>
<rect x="533" y="580" width="4" height="3" fill="#00FF00"/>
<rect x="537" y="583" width="4" height="3" fill="#FF0000"/>
<rect x="541" y="583" width="4" height="7" fill="#FF0000"/>
<rect x="545" y="583" width="4" height="9" fill="#FF0000"/>
<rect x="549" y="583" width="4" height="7" fill="#FF0000"/>
<rect x="553" y="583" width="4" height="3" fill="#FF0000"/>
<rect x="557" y="583" width="4" height="2" fill="#FF0000"/>
<rect x="561" y="583" width="4" height="2" fill="#FF0000"/>
<rect x="565" y="583" width="4" height="3" fill="#FF0000"/>
<rect x="569" y="583" width="4" height="1" fill="#FF0000"/>
<rect x="573" y="583" width="4" height="1" fill="#FF0000"/>
<rect x="577" y="583" width="4" height="3" fill="#FF0000"/>
<rect x="581" y="583" width="4" height="11" fill="#FF0000"/>
<rect x="585" y="583" width="4" height="11" fill="#FF0000"/>
<rect x="589" y="583" width="4" height="11" fill="#FF0000"/>
<rect x="593" y="583" width="4" height="10" fill="#FF0000"/>
<rect x="597" y="583" width="4" height="27" fill="#FF0000"/>
<rect x="601" y="583" width="4" height="22" fill="#FF0000"/>
<rect x="605" y="583" width="4" height="17" fill="#FF0000"/>
<rect x="609" y="583" width="4" height="13" fill="#FF0000"/>
<rect x="613" y="583" width="4" height="9" fill="#FF0000"/>
<rect x="617" y="583" width="4" height="6" fill="#FF0000"/>
<rect x="621" y="583" width="4" height="4" fill="#FF0000"/>
<rect x="625" y="583" width="4" height="2" fill="#FF0000"/>
<rect x="629" y="581" width="4" height="2" fill="#00FF00"/>
<rect x="633" y="578" width="4" height="5" fill="#00FF00"/>
<rect x="637" y="577" width="4" height="6" fill="#00FF00"/>
<rect x="641" y="578" width="4" height="5" fill="#00FF00"/>
<rect x="645" y="579" width="4" height="4" fill="#00FF00"/>
<rect x="649" y="581" width="4" height="2" fill="#00FF00"/>
<rect x="653" y="583" width="4" height="27" fill="#FF0000"/>
<rect x="657" y="583" width="4" height="33" fill="#FF0000"/>
<rect x="661" y="583" width="4" height="23" fill="#FF0000"/>
<rect x="665" y="583" width="4" height="15" fill="#FF0000"/>
<rect x="669" y="583" width="4" height="11" fill="#FF0000"/>
<rect x="673" y="583" width="4" height="8" fill="#FF0000"/>
<rect x="677" y="583" width="4" height="9" fill="#FF0000"/>
<rect x="681" y="583" width="4" height="11" fill="#FF0000"/>
<rect x="685" y="583" width="4" height="12" fill="#FF0000"/>
<rect x="689" y="583" width="4" height="11" fill="#FF0000"/>
<rect x="693" y="583" width="4" height="7" fill="#FF0000"/>
<rect x="697" y="583" width="4" height="5" fill="#FF0000"/>
<rect x="701" y="583" width="4" height="2" fill="#FF0000"/>
<rect x="705" y="582" width="4" height="1" fill="#00FF00"/>
<rect x="709" y="580" width="4" height="3" fill="#00FF00"/>
<rect x="713" y="580" width="4" height="3" fill="#00FF00"/>
<rect x="717" y="580" width="4" height="3" fill="#00FF00"/>
<rect x="721" y="580" width="4" height="3" fill="#00FF00"/>
<rect x="725" y="583" width="4" height="3" fill="#FF0000"/>
<rect x="729" y="583" width="4" height="5" fill="#FF0000"/>
<rect x="733" y="583" width="4" height="7" fill="#FF0000"/>
<rect x="737" y="583" width="4" height="8" fill="#FF0000"/>
<rect x="741" y="583" width="4" height="10" fill="#FF0000"/>
<rect x="745" y="583" width="4" height="10" fill="#FF0000"/>
<rect x="749" y="583" width="4" height="10" fill="#FF0000"/>
<rect x="753" y="583" width="4" height="3" fill="#FF0000"/>
<rect x="757" y="582" width="4" height="1" fill="#00FF00"/>
<rect x="761" y="578" width="4" height="5" fill="#00FF00"/>
<rect x="765" y="576" width="4" height="7" fill="#00FF00"/>
<rect x="769" y="577" width="4" height="6" fill="#00FF00"/>
<rect x="773" y="577" width="4" height="6" fill="#00FF00"/>
<rect x="777" y="570" width="4" height="13" fill="#00FF00"/>
<rect x="781" y="568" width="4" height="15" fill="#00FF00"/>
<rect x="785" y="568" width="4" height="15" fill="#00FF00"/>
<rect x="789" y="571" width="4" height="12" fill="#00FF00"/>
<rect x="793" y="571" width="4" height="12" fill="#00FF00"/>
<rect x="797" y="573" width="4" height="10" fill="#00FF00"/>
<rect x="801" y="570" width="4" height="13" fill="#00FF00"/>
<rect x="805" y="572" width="4" height="11" fill="#00FF00"/>
<rect x="809" y="573" width="4" height="10" fill="#00FF00"/>
<rect x="813" y="575" width="4" height="8" fill="#00FF00"/>
<rect x="817" y="577" width="4" height="6" fill="#00FF00"/>
<rect x="821" y="580" width="4" height="3" fill="#00FF00"/>
<rect x="825" y="580" width="4" height="3" fill="#00FF00"/>
<rect x="829" y="581" width="4" height="2" fill="#00FF00"/>
<rect x="833" y="580" width="4" height="3" fill="#00FF00"/>
<rect x="837" y="580" width="4" height="3" fill="#00FF00"/>
<rect x="841" y="581" width="4" height="2" fill="#00FF00"/>
<rect x="845" y="580" width="4" height="3" fill="#00FF00"/>
<rect x="849" y="580" width="4" height="3" fill="#00FF00"/>
<rect x="853" y="581" width="4" height="2" fill="#00FF00"/>
<rect x="857" y="582" width="4" height="1" fill="#00FF00"/>
<rect x="861" y="583" width="4" height="2" fill="#FF0000"/>
<rect x="865" y="583" width="4" height="1" fill="#FF0000"/>
<rect x="869" y="582" width="4" height="1" fill="#00FF00"/>
<rect x="873" y="583" width="4" height="3" fill="#FF0000"/>
<rect x="877" y="583" width="4" height="5" fill="#FF0000"/>
<rect x="881" y="583" width="4" height="7" fill="#FF0000"/>
<rect x="885" y="583" width="4" height="7" fill="#FF0000"/>
<rect x="889" y="583" width="4" height="5" fill="#FF0000"/>
<rect x="893" y="583" width="4" height="3" fill="#FF0000"/>
<rect x="897" y="583" width="4" height="1" fill="#FF0000"/>
<rect x="901" y="583" width="4" height="1" fill="#FF0000"/>
<rect x="905" y="582" width="4" height="1" fill="#00FF00"/>
<rect x="909" y="581" width="4" height="2" fill="#00FF00"/>
<rect x="913" y="566" width="4" height="17" fill="#00FF00"/>
<rect x="917" y="559" width="4" height="24" fill="#00FF00"/>
<rect x="921" y="564" width="4" height="19" fill="#00FF00"/>
<rect x="925" y="570" width="4" height="13" fill="#00FF00"/>
<rect x="929" y="574" width="4" height="9" fill="#00FF00"/>
<rect x="933" y="577" width="4" height="6" fill="#00FF00"/>
<rect x="937" y="579" width="4" height="4" fill="#00FF00"/>
<rect x="941" y="571" width="4" height="12" fill="#00FF00"/>
<rect x="945" y="566" width="4" height="17" fill="#00FF00"/>
<rect x="949" y="571" width="4" height="12" fill="#00FF00"/>
<rect x="953" y="575" width="4" height="8" fill="#00FF00"/>
<rect x="957" y="578" width="4" height="5" fill="#00FF00"/>
<rect x="961" y="581" width="4" height="2" fill="#00FF00"/>
<rect x="965" y="583" width="4" height="1" fill="#FF0000"/>
<rect x="969" y="583" width="4" height="2" fill="#FF0000"/>
<rect x="973" y="583" width="4" height="3" fill="#FF0000"/>
<rect x="977" y="583" width="4" height="4" fill="#FF0000"/>
<rect x="981" y="583" width="4" height="4" fill="#FF0000"/>
<rect x="985" y="583" width="4" height="4" fill="#FF0000"/>
<rect x="989" y="583" width="4" height="5" fill="#FF0000"/>
<rect x="993" y="583" width="4" height="5" fill="#FF0000"/>
<rect x="997" y="583" width="4" height="4" fill="#FF0000"/>
<rect x="1001" y="583" width="4" height="3" fill="#FF0000"/>
<rect x="1005" y="583" width="4" height="2" fill="#FF0000"/>
<rect x="1009" y="582" width="4" height="1" fill="#00FF00"/>
<rect x="1013" y="581" width="4" height="2" fill="#00FF00"/>
<rect x="1017" y="551" width="4" height="32" fill="#00FF00"/>
<rect x="1021" y="559" width="4" height="24" fill="#00FF00"/>
<rect x="1025" y="561" width="4" height="22" fill="#00FF00"/>
<rect x="1029" y="568" width="4" height="15" fill="#00FF00"/>
<rect x="1033" y="569" width="4" height="14" fill="#00FF00"/>
<rect x="1037" y="548" width="4" height="35" fill="#00FF00"/>
<rect x="1041" y="558" width="4" height="25" fill="#00FF00"/>
</g>
<g shape-rendering="crispEdges" fill="none" stroke="#fff" stroke-width="1">
<path d="M2.5,2.5H1312.5V410.5H2.5Z"/>
<path d="M2.5,412.5H1312.5V525.5H2.5Z"/>
<path d="M2.5,527.5H1312.5V649.5H2.5Z"/>
</g>
<g shape-rendering="crispEdges" fill="#fff">
<rect x="1313" y="11" width="2" height="1"/>
<rect x="1313" y="44" width="2" height="1"/>
<rect x="1313" y="77" width="2" height="1"/>
<rect x="1313" y="110" width="2" height="1"/>
<rect x="1313" y="143" width="2" height="1"/>
<rect x="1313" y="176" width="2" height="1"/>
<rect x="1313" y="209" width="2" height="1"/>
<rect x="1313" y="242" width="2" height="1"/>
<rect x="1313" y="275" width="2" height="1"/>
<rect x="1313" y="308" width="2" height="1"/>
<rect x="1313" y="341" width="2" height="1"/>
<rect x="1313" y="374" width="2" height="1"/>
<rect x="1313" y="407" width="2" height="1"/>
<rect x="1313" y="413" width="2" height="1"/>
<rect x="1313" y="461" width="2" height="1"/>
<rect x="1313" y="523" width="2" height="1"/>
<rect x="1313" y="528" width="2" height="1"/>
<rect x="1313" y="583" width="2" height="1"/>
<rect x="1313" y="649" width="2" height="1"/>
<rect x="3" y="650" width="1" height="3"/>
<rect x="67" y="650" width="1" height="3"/>
<rect x="131" y="650" width="1" height="3"/>
<rect x="195" y="650" width="1" height="3"/>
<rect x="259" y="650" width="1" height="3"/>
<rect x="323" y="650" width="1" height="3"/>
<rect x="387" y="650" width="1" height="3"/>
<rect x="451" y="650" width="1" height="3"/>
<rect x="515" y="650" width="1" height="3"/>
<rect x="579" y="650" width="1" height="3"/>
<rect x="643" y="650" width="1" height="3"/>
<rect x="707" y="650" width="1" height="3"/>
<rect x="771" y="650" width="1" height="3"/>
<rect x="835" y="650" width="1" height="3"/>
<rect x="899" y="650" width="1" height="3"/>
<rect x="963" y="650" width="1" height="3"/>
<rect x="1027" y="650" width="1" height="3"/>
</g>
<text xml:space="preserve" x="7" y="13.8" textLength="200" lengthAdjust="spacingAndGlyphs">EURUSD,H4  1.11165 1.11312 1.11098 1.11311</text>
<text xml:space="preserve" x="1318" y="15" textLength="32" lengthAdjust="spacingAndGlyphs">1.11720</text>
<text xml:space="preserve" x="1318" y="48" textLength="32" lengthAdjust="spacingAndGlyphs">1.11470</text>
<text xml:space="preserve" x="1318" y="81" textLength="32" lengthAdjust="spacingAndGlyphs">1.11225</text>
<text xml:space="preserve" x="1318" y="114" textLength="32" lengthAdjust="spacingAndGlyphs">1.10975</text>
<text xml:space="preserve" x="1318" y="147" textLength="32" lengthAdjust="spacingAndGlyphs">1.10725</text>
<text xml:space="preserve" x="1318" y="180" textLength="32" lengthAdjust="spacingAndGlyphs">1.10475</text>
<text xml:space="preserve" x="1318" y="213" textLength="32" lengthAdjust="spacingAndGlyphs">1.10225</text>
<text xml:space="preserve" x="1318" y="246" textLength="32" lengthAdjust="spacingAndGlyphs">1.09975</text>
<text xml:space="preserve" x="1318" y="279" textLength="32" lengthAdjust="spacingAndGlyphs">1.09725</text>
<text xml:space="preserve" x="1318" y="312" textLength="32" lengthAdjust="spacingAndGlyphs">1.09475</text>
<text xml:space="preserve" x="1318" y="345" textLength="32" lengthAdjust="spacingAndGlyphs">1.09225</text>
<text xml:space="preserve" x="1318" y="378" textLength="32" lengthAdjust="spacingAndGlyphs">1.08975</text>
<text xml:space="preserve" x="1318" y="411" textLength="32" lengthAdjust="spacingAndGlyphs">1.08730</text>
<rect x="1314" y="61" width="41" height="11" fill="#fff"/>
<text xml:space="preserve" x="1318" y="69.5" textLength="32" lengthAdjust="spacingAndGlyphs" style="fill:#000;">1.11311</text>
<text xml:space="preserve" x="1276" y="404" textLength="31" lengthAdjust="spacingAndGlyphs" style="fill:#FFFF00;font-size:14px;">29:36</text>
<text xml:space="preserve" x="7" y="424.5" textLength="603" lengthAdjust="spacingAndGlyphs">MACD(12,26,9) 0.002581 0.001619 0.000962 0.000000  H4 MACD nrp_csc (12,26,9) 0.0026 0.0018  D1 MACD nrp_csc (12,26,9) 0.0011 -0.0010</text>
<text xml:space="preserve" x="1316" y="422.5" textLength="37" lengthAdjust="spacingAndGlyphs">0.002887</text>
<rect x="1314" y="433" width="7" height="11" fill="#C0C0C0"/>
<text xml:space="preserve" x="1315" y="442" textLength="5" lengthAdjust="spacingAndGlyphs" style="fill:#000;">0</text>
<text xml:space="preserve" x="1316" y="464.5" textLength="17.5" lengthAdjust="spacingAndGlyphs">0.00</text>
<text xml:space="preserve" x="1316" y="521.5" textLength="41" lengthAdjust="spacingAndGlyphs">-0.003846</text>
<text xml:space="preserve" x="7" y="540" textLength="96.5" lengthAdjust="spacingAndGlyphs">JMASlope(14,0) 0.0011</text>
<text xml:space="preserve" x="1316" y="538" textLength="28" lengthAdjust="spacingAndGlyphs">0.0025</text>
<text xml:space="preserve" x="1316" y="587" textLength="17.5" lengthAdjust="spacingAndGlyphs">0.00</text>
<text xml:space="preserve" x="1316" y="646" textLength="26" lengthAdjust="spacingAndGlyphs">-0.003</text>
<text xml:space="preserve" x="3" y="661.5" textLength="53.6" lengthAdjust="spacingAndGlyphs">19 Aug 2019</text>
<text xml:space="preserve" x="67" y="661.5" textLength="56.3" lengthAdjust="spacingAndGlyphs">22 Aug 04:00</text>
<text xml:space="preserve" x="131" y="661.5" textLength="56.3" lengthAdjust="spacingAndGlyphs">26 Aug 20:00</text>
<text xml:space="preserve" x="195" y="661.5" textLength="56.3" lengthAdjust="spacingAndGlyphs">29 Aug 12:00</text>
<text xml:space="preserve" x="259" y="661.5" textLength="51.5" lengthAdjust="spacingAndGlyphs">3 Sep 04:00</text>
<text xml:space="preserve" x="323" y="661.5" textLength="51.5" lengthAdjust="spacingAndGlyphs">5 Sep 20:00</text>
<text xml:space="preserve" x="387" y="661.5" textLength="56.8" lengthAdjust="spacingAndGlyphs">10 Sep 12:00</text>
<text xml:space="preserve" x="451" y="661.5" textLength="56.8" lengthAdjust="spacingAndGlyphs">13 Sep 04:00</text>
<text xml:space="preserve" x="515" y="661.5" textLength="56.8" lengthAdjust="spacingAndGlyphs">17 Sep 20:00</text>
<text xml:space="preserve" x="579" y="661.5" textLength="56.8" lengthAdjust="spacingAndGlyphs">20 Sep 12:00</text>
<text xml:space="preserve" x="643" y="661.5" textLength="56.8" lengthAdjust="spacingAndGlyphs">25 Sep 04:00</text>
<text xml:space="preserve" x="707" y="661.5" textLength="56.8" lengthAdjust="spacingAndGlyphs">27 Sep 20:00</text>
<text xml:space="preserve" x="771" y="661.5" textLength="49.4" lengthAdjust="spacingAndGlyphs">2 Oct 08:00</text>
<text xml:space="preserve" x="835" y="661.5" textLength="49.4" lengthAdjust="spacingAndGlyphs">7 Oct 00:00</text>
<text xml:space="preserve" x="899" y="661.5" textLength="49.4" lengthAdjust="spacingAndGlyphs">9 Oct 16:00</text>
<text xml:space="preserve" x="963" y="661.5" textLength="54.7" lengthAdjust="spacingAndGlyphs">14 Oct 08:00</text>
<text xml:space="preserve" x="1027" y="661.5" textLength="54.7" lengthAdjust="spacingAndGlyphs">17 Oct 00:00</text>
</svg></body></html>
